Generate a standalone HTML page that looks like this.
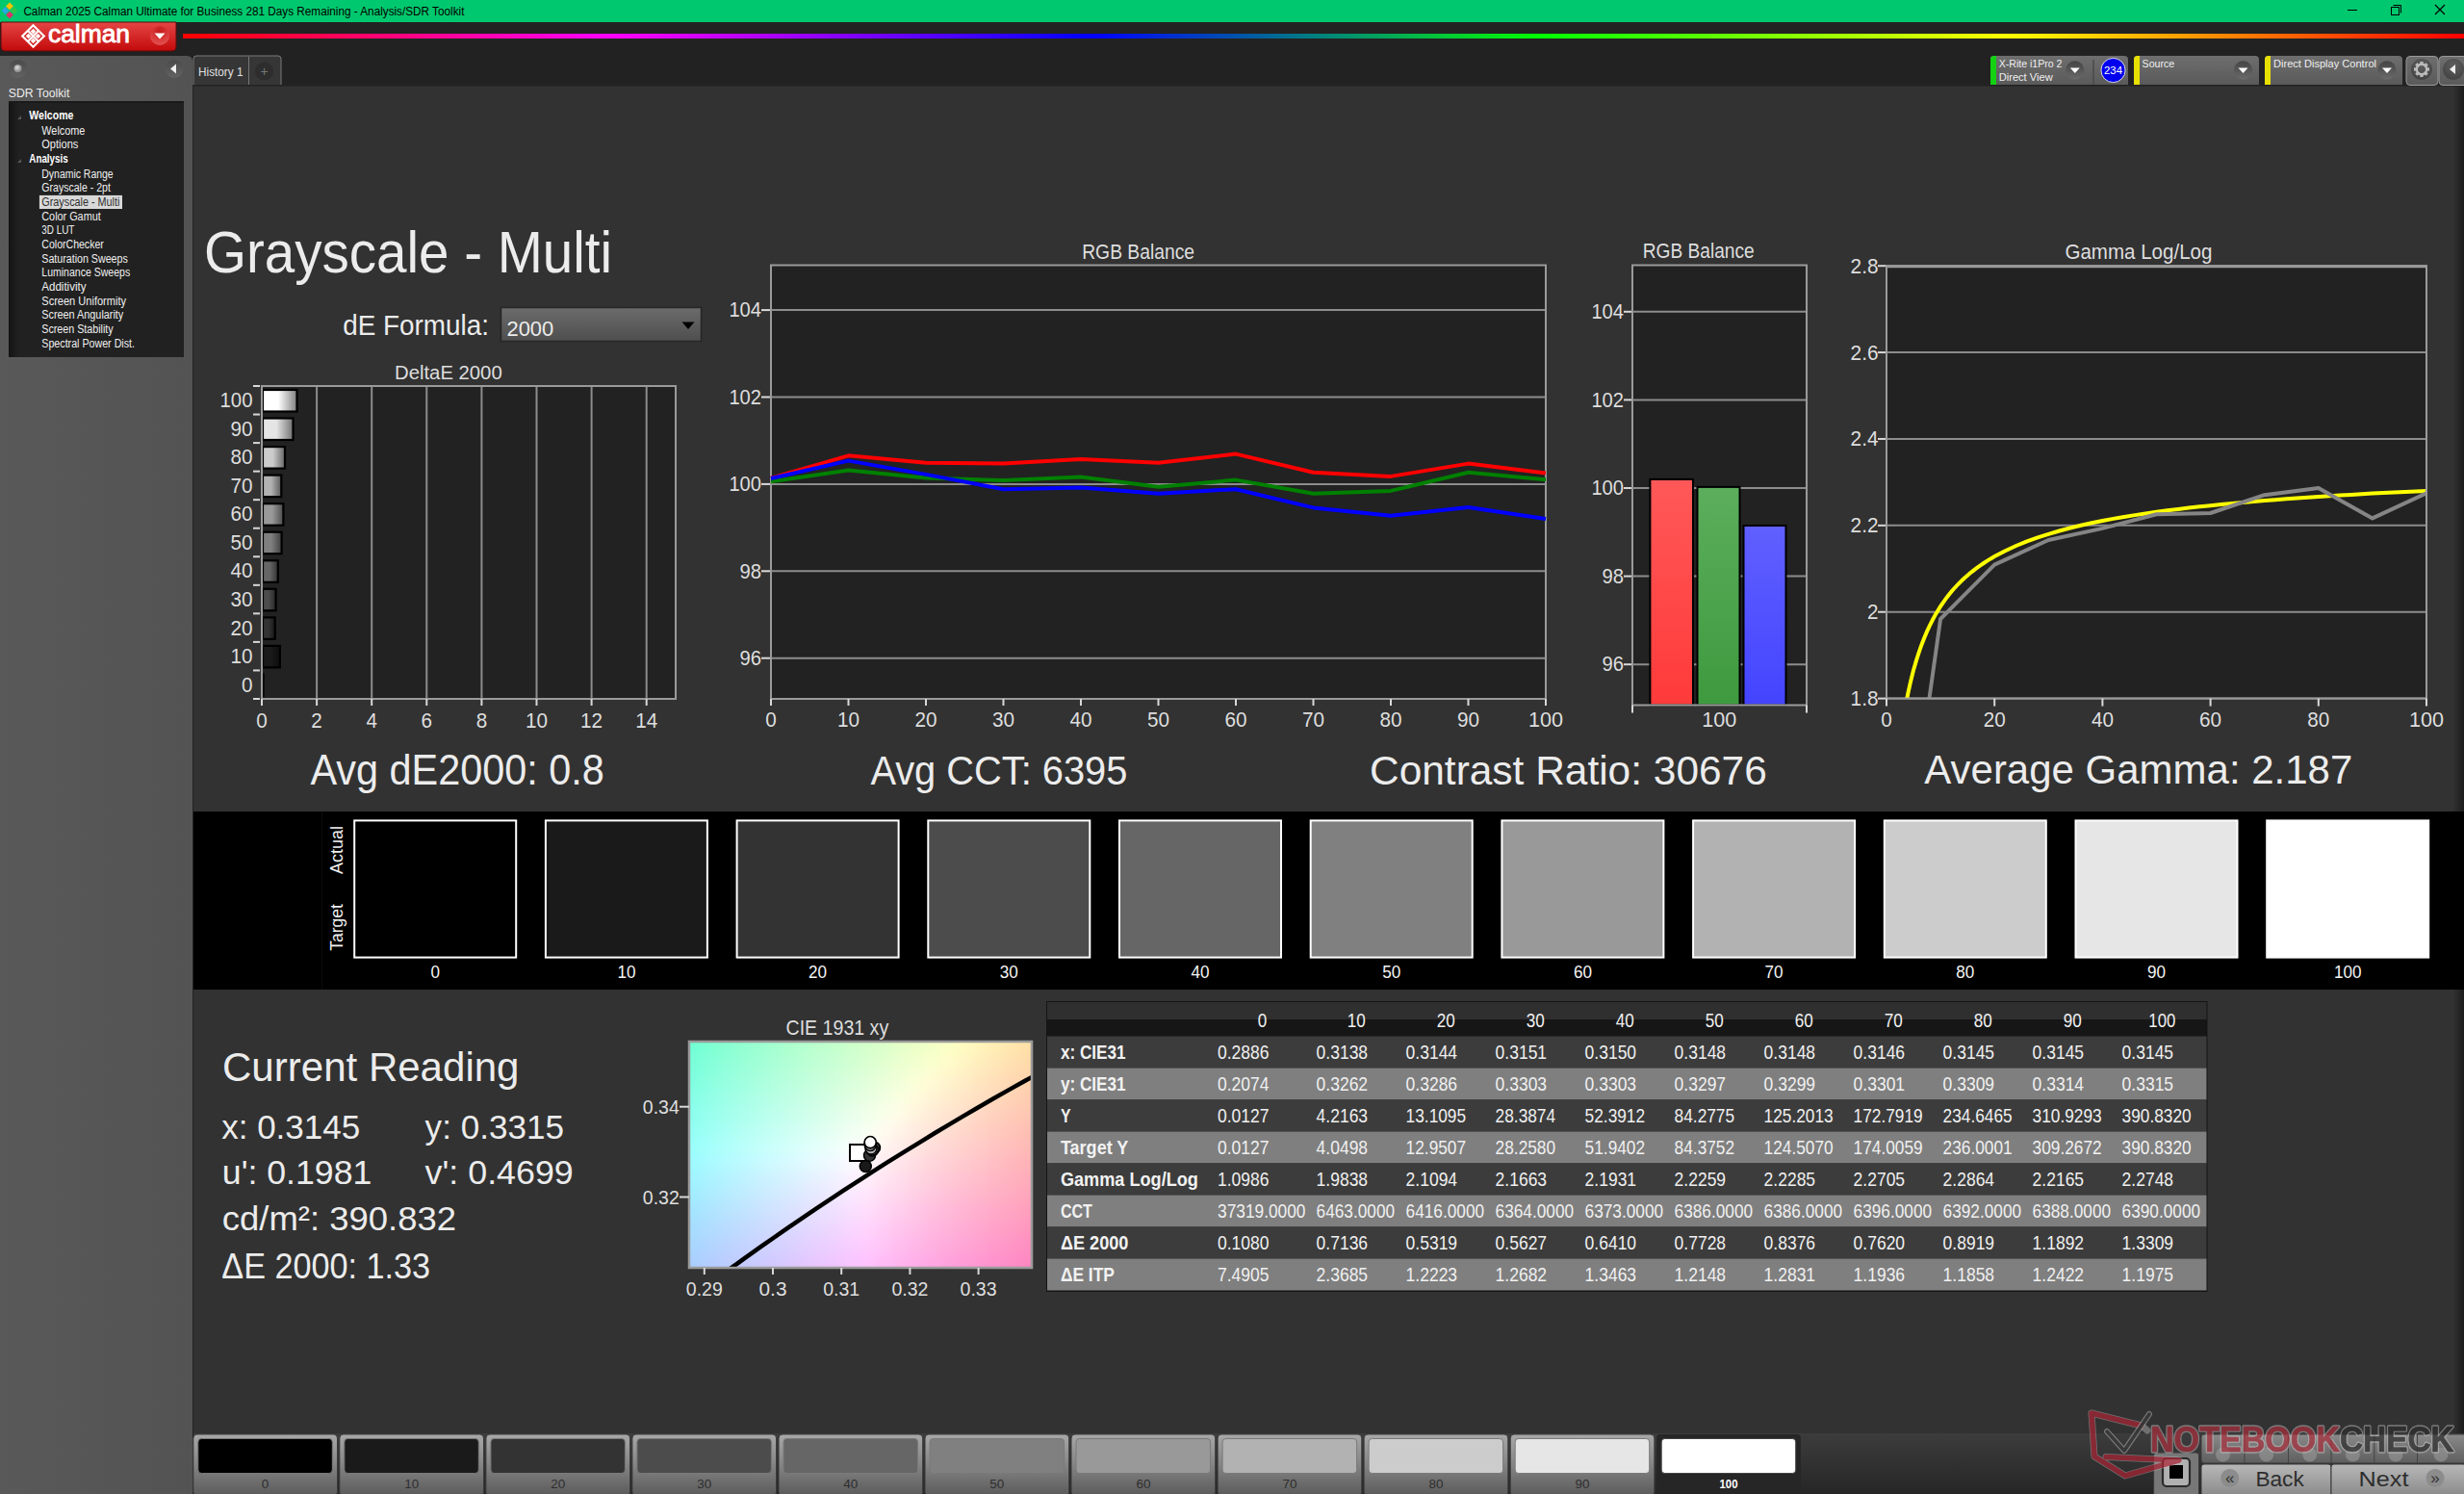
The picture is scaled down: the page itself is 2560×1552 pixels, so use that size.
<!DOCTYPE html><html><head><meta charset="utf-8"><title>Calman</title><style>html,body{margin:0;padding:0;background:#323232;overflow:hidden}svg{display:block}text{font-family:"Liberation Sans",sans-serif}</style></head><body>
<svg width="2560" height="1552" viewBox="0 0 2560 1552">
<defs>
<linearGradient id="rainbow" x1="0" x2="1" y1="0" y2="0">
<stop offset="0" stop-color="#ff0000"/><stop offset="0.19" stop-color="#ff00ff"/><stop offset="0.398" stop-color="#0000ff"/>
<stop offset="0.595" stop-color="#00ff00"/><stop offset="0.801" stop-color="#ffff00"/><stop offset="1" stop-color="#ff0000"/></linearGradient>
<linearGradient id="sidebar" x1="0" x2="1" y1="0" y2="0"><stop offset="0" stop-color="#595959"/><stop offset="1" stop-color="#535353"/></linearGradient>
<linearGradient id="redbtn" x1="0" x2="0" y1="0" y2="1"><stop offset="0" stop-color="#e54545"/><stop offset="1" stop-color="#c30a0a"/></linearGradient>
<linearGradient id="panel" x1="0" x2="0" y1="0" y2="1"><stop offset="0" stop-color="#6e6e6e"/><stop offset="1" stop-color="#5a5a5a"/></linearGradient>
<linearGradient id="strip" x1="0" x2="0" y1="0" y2="1"><stop offset="0" stop-color="#3c3c3c"/><stop offset="1" stop-color="#262626"/></linearGradient>
<linearGradient id="btn" x1="0" x2="0" y1="0" y2="1"><stop offset="0" stop-color="#a8a8a8"/><stop offset="0.45" stop-color="#888"/><stop offset="1" stop-color="#5a5a5a"/></linearGradient>
<linearGradient id="dd" x1="0" x2="0" y1="0" y2="1"><stop offset="0" stop-color="#6c6c6c"/><stop offset="1" stop-color="#4e4e4e"/></linearGradient>
<radialGradient id="knob" cx="0.5" cy="0.35" r="0.6"><stop offset="0" stop-color="#5a5a5a"/><stop offset="1" stop-color="#3a3a3a"/></radialGradient>
<linearGradient id="rightedge" x1="0" x2="1" y1="0" y2="0"><stop offset="0" stop-color="#323232"/><stop offset="1" stop-color="#1c1c1c"/></linearGradient>
</defs>
<rect x="0" y="0" width="2560" height="23" fill="#00c86e"/>
<rect x="0" y="23" width="2560" height="65" fill="#222222"/>
<rect x="190" y="35" width="2370" height="5" fill="url(#rainbow)"/>
<path d="M0 58 H194 Q200 58 200 64 V1552 H0 Z" fill="url(#sidebar)"/>
<rect x="200" y="88" width="2360" height="1464" fill="#323232"/>
<rect x="2548" y="88" width="12" height="1464" fill="url(#rightedge)"/>
<rect x="200" y="88" width="1" height="1464" fill="#222"/>
<linearGradient id="knob2" x1="0" x2="0" y1="0" y2="1"><stop offset="0" stop-color="#444"/><stop offset="1" stop-color="#6a6a6a"/></linearGradient>
<g transform="translate(10,11) rotate(45)"><rect x="-6" y="-6" width="5.5" height="5.5" fill="#f5c400"/><rect x="0.5" y="-6" width="5.5" height="5.5" fill="#2cc84a"/><rect x="-6" y="0.5" width="5.5" height="5.5" fill="#2aa8e0"/><rect x="0.5" y="0.5" width="5.5" height="5.5" fill="#e0306a"/></g>
<text x="24.4" y="15.8" font-size="12.50" textLength="458.0" lengthAdjust="spacingAndGlyphs" fill="#000">Calman 2025 Calman Ultimate for Business 281 Days Remaining  - Analysis/SDR Toolkit</text>
<line x1="2439" y1="10.5" x2="2449" y2="10.5" stroke="#000" stroke-width="1"/>
<rect x="2484.5" y="7.5" width="8" height="8" fill="none" stroke="#000" stroke-width="1"/><path d="M2486.5 5.5 H2494.5 V13.5" fill="none" stroke="#000" stroke-width="1"/>
<path d="M2530 5 L2540 15 M2540 5 L2530 15" stroke="#000" stroke-width="1.2"/>
<path d="M1 23 H183 V49 Q183 53 179 53 H5 Q1 53 1 49 Z" fill="url(#redbtn)" stroke="#5a0a0a" stroke-width="1"/>
<g transform="translate(34.5,37.5) rotate(45)" fill="none" stroke="#fff" stroke-width="2.2"><rect x="-8" y="-8" width="16" height="16"/><path d="M0 -8 V8 M-8 0 H8"/></g>
<g transform="translate(34.5,37.5) rotate(45)" fill="#fff"><rect x="-5.5" y="-5.5" width="4" height="4"/><rect x="1.5" y="-5.5" width="4" height="4"/><rect x="-5.5" y="1.5" width="4" height="4"/><rect x="1.5" y="1.5" width="4" height="4"/></g>
<text x="50.0" y="43.5" font-size="26.50" textLength="85.0" lengthAdjust="spacingAndGlyphs" fill="#fff" stroke="#fff" stroke-width="0.9">calman</text>
<radialGradient id="rknob" cx="0.5" cy="0.25" r="0.75"><stop offset="0" stop-color="#c81818"/><stop offset="1" stop-color="#e45252"/></radialGradient><circle cx="166" cy="37" r="10" fill="url(#rknob)"/>
<path d="M160.5 34.5 H171.5 L166 40.5 Z" fill="#fff"/>
<path d="M201 88 V61 Q201 58 204 58 H289 Q292 58 292 61 V88 Z" fill="#363636"/>
<path d="M201 88 V61 Q201 58 204 58 H289 Q292 58 292 61 V88" fill="none" stroke="#7a7a7a" stroke-width="1"/>
<rect x="200" y="88" width="2360" height="1.5" fill="#222"/>
<line x1="258.5" y1="59" x2="258.5" y2="88" stroke="#777" stroke-width="1"/>
<text x="206.0" y="78.5" font-size="13.37" textLength="46.5" lengthAdjust="spacingAndGlyphs" fill="#e0e0e0">History 1</text>
<circle cx="274.5" cy="74" r="9.5" fill="#2c2c2c" opacity="0.9"/>
<text x="274.5" y="78.5" font-size="14.00" text-anchor="middle" fill="#777">+</text>
<path d="M2068 88 V61 Q2068 58 2071 58 H2207 Q2211 58 2211 62 V88 Z" fill="url(#panel)"/>
<path d="M2068 88 V62 Q2068 58 2072 58 H2074 V88 Z" fill="#12d212"/>
<circle cx="2155.8" cy="73" r="9.7" fill="url(#knob2)"/>
<path d="M2150.8 70.5 H2160.8 L2155.8 76 Z" fill="#fff"/>
<text x="2076.7" y="69.8" font-size="11.05" textLength="65.8" lengthAdjust="spacingAndGlyphs" fill="#f0f0f0">X-Rite i1Pro 2</text>
<text x="2076.7" y="83.6" font-size="11.05" textLength="56.0" lengthAdjust="spacingAndGlyphs" fill="#f0f0f0">Direct View</text>
<line x1="2175" y1="62" x2="2175" y2="88" stroke="#4a4a4a" stroke-width="1.5"/>
<circle cx="2195.5" cy="73" r="12.6" fill="#0000ee" stroke="#ddd" stroke-width="1"/>
<text x="2195.5" y="77.0" font-size="10.76" textLength="19.0" lengthAdjust="spacingAndGlyphs" text-anchor="middle" fill="#fff">234</text>
<path d="M2217 88 V61 Q2217 58 2220 58 H2343 Q2347 58 2347 62 V88 Z" fill="url(#panel)"/>
<path d="M2217 88 V62 Q2217 58 2221 58 H2223 V88 Z" fill="#e8e000"/>
<circle cx="2330.5" cy="73" r="9.7" fill="url(#knob2)"/>
<path d="M2325.5 70.5 H2335.5 L2330.5 76 Z" fill="#fff"/>
<text x="2225.6" y="69.8" font-size="11.05" textLength="33.5" lengthAdjust="spacingAndGlyphs" fill="#f0f0f0">Source</text>
<path d="M2353 88 V61 Q2353 58 2356 58 H2492 Q2496 58 2496 62 V88 Z" fill="url(#panel)"/>
<path d="M2353 88 V62 Q2353 58 2357 58 H2359 V88 Z" fill="#e8e000"/>
<circle cx="2480" cy="73" r="9.7" fill="url(#knob2)"/>
<path d="M2475 70.5 H2485 L2480 76 Z" fill="#fff"/>
<text x="2362.0" y="69.8" font-size="11.05" textLength="107.0" lengthAdjust="spacingAndGlyphs" fill="#f0f0f0">Direct Display Control</text>
<rect x="2500" y="58.5" width="33" height="30" rx="4" fill="url(#panel)" stroke="#999" stroke-width="1"/>
<circle cx="2516" cy="72" r="11" fill="url(#knob)" opacity="0.7"/>
<g transform="translate(2516,72)" fill="#bbb"><rect x="-1.6" y="-8" width="3.2" height="4" transform="rotate(0)"/><rect x="-1.6" y="-8" width="3.2" height="4" transform="rotate(45)"/><rect x="-1.6" y="-8" width="3.2" height="4" transform="rotate(90)"/><rect x="-1.6" y="-8" width="3.2" height="4" transform="rotate(135)"/><rect x="-1.6" y="-8" width="3.2" height="4" transform="rotate(180)"/><rect x="-1.6" y="-8" width="3.2" height="4" transform="rotate(225)"/><rect x="-1.6" y="-8" width="3.2" height="4" transform="rotate(270)"/><rect x="-1.6" y="-8" width="3.2" height="4" transform="rotate(315)"/><circle r="5.2" fill="none" stroke="#bbb" stroke-width="2.4"/></g>
<rect x="2534" y="58.5" width="30" height="30" rx="4" fill="url(#panel)" stroke="#999" stroke-width="1"/>
<circle cx="2549" cy="72" r="11" fill="url(#knob)" opacity="0.7"/>
<path d="M2545 72 L2551 67 V77 Z" fill="#eee"/>
<linearGradient id="sknob" x1="0" x2="0" y1="0" y2="1"><stop offset="0" stop-color="#4a4a4a"/><stop offset="1" stop-color="#626262"/></linearGradient>
<radialGradient id="ball" cx="0.4" cy="0.35" r="0.7"><stop offset="0" stop-color="#e0e0e0"/><stop offset="1" stop-color="#777"/></radialGradient>
<circle cx="18.6" cy="71.5" r="9.5" fill="url(#sknob)"/>
<circle cx="18.6" cy="71.3" r="4" fill="url(#ball)"/>
<circle cx="181" cy="71.5" r="9.5" fill="url(#sknob)"/>
<path d="M177 71.5 L183 66.5 V76.5 Z" fill="#f0f0f0"/>
<text x="8.8" y="100.8" font-size="13.37" textLength="63.7" lengthAdjust="spacingAndGlyphs" fill="#ececec">SDR Toolkit</text>
<linearGradient id="treel" x1="0" x2="1" y1="0" y2="0"><stop offset="0" stop-color="#141414"/><stop offset="0.06" stop-color="#212121"/><stop offset="1" stop-color="#212121"/></linearGradient>
<rect x="9" y="105" width="182" height="266" fill="url(#treel)"/>
<rect x="9" y="105" width="182" height="2" fill="#1a1a1a"/>
<path d="M18 124 L22 124 L22 120 Z" fill="#555"/>
<path d="M18 169 L22 169 L22 165 Z" fill="#555"/>
<text x="30.3" y="124.2" font-size="12.21" textLength="46.1" lengthAdjust="spacingAndGlyphs" font-weight="bold" fill="#ffffff">Welcome</text>
<text x="43.3" y="140.1" font-size="12.21" textLength="45.1" lengthAdjust="spacingAndGlyphs" fill="#f0f0f0">Welcome</text>
<text x="43.3" y="153.8" font-size="12.21" textLength="38.0" lengthAdjust="spacingAndGlyphs" fill="#f0f0f0">Options</text>
<text x="30.3" y="169.3" font-size="12.21" textLength="40.4" lengthAdjust="spacingAndGlyphs" font-weight="bold" fill="#ffffff">Analysis</text>
<text x="43.3" y="185.2" font-size="12.21" textLength="74.4" lengthAdjust="spacingAndGlyphs" fill="#f0f0f0">Dynamic Range</text>
<text x="43.3" y="199.1" font-size="12.21" textLength="71.6" lengthAdjust="spacingAndGlyphs" fill="#f0f0f0">Grayscale - 2pt</text>
<rect x="40.9" y="202.9" width="86.1" height="14.1" fill="#d8d8d8"/>
<text x="43.3" y="213.9" font-size="12.21" textLength="81.1" lengthAdjust="spacingAndGlyphs" fill="#303030">Grayscale - Multi</text>
<text x="43.3" y="228.9" font-size="12.21" textLength="61.4" lengthAdjust="spacingAndGlyphs" fill="#f0f0f0">Color Gamut</text>
<text x="43.3" y="242.8" font-size="12.21" textLength="34.0" lengthAdjust="spacingAndGlyphs" fill="#f0f0f0">3D LUT</text>
<text x="43.3" y="258.1" font-size="12.21" textLength="64.5" lengthAdjust="spacingAndGlyphs" fill="#f0f0f0">ColorChecker</text>
<text x="43.3" y="273.1" font-size="12.21" textLength="89.5" lengthAdjust="spacingAndGlyphs" fill="#f0f0f0">Saturation Sweeps</text>
<text x="43.3" y="287.0" font-size="12.21" textLength="91.9" lengthAdjust="spacingAndGlyphs" fill="#f0f0f0">Luminance Sweeps</text>
<text x="43.3" y="302.0" font-size="12.21" textLength="46.2" lengthAdjust="spacingAndGlyphs" fill="#f0f0f0">Additivity</text>
<text x="43.3" y="316.8" font-size="12.21" textLength="87.7" lengthAdjust="spacingAndGlyphs" fill="#f0f0f0">Screen Uniformity</text>
<text x="43.3" y="331.0" font-size="12.21" textLength="85.0" lengthAdjust="spacingAndGlyphs" fill="#f0f0f0">Screen Angularity</text>
<text x="43.3" y="346.0" font-size="12.21" textLength="74.4" lengthAdjust="spacingAndGlyphs" fill="#f0f0f0">Screen Stability</text>
<text x="43.3" y="361.0" font-size="12.21" textLength="96.7" lengthAdjust="spacingAndGlyphs" fill="#f0f0f0">Spectral Power Dist.</text>
<text x="212.0" y="283.1" font-size="61.48" textLength="424.0" lengthAdjust="spacingAndGlyphs" fill="#ececec">Grayscale - Multi</text>
<text x="356.3" y="347.8" font-size="29.65" textLength="151.6" lengthAdjust="spacingAndGlyphs" fill="#ececec">dE Formula:</text>
<rect x="520.5" y="319.5" width="208" height="35" fill="url(#dd)" stroke="#262626" stroke-width="1.5"/>
<text x="526.5" y="348.6" font-size="22.24" textLength="48.7" lengthAdjust="spacingAndGlyphs" fill="#ececec">2000</text>
<path d="M708.5 334.5 H721.5 L715 342 Z" fill="#000"/>
<rect x="272" y="401" width="430" height="325" fill="#222222"/>
<text x="410.0" y="393.8" font-size="21.08" textLength="111.7" lengthAdjust="spacingAndGlyphs" fill="#dedede">DeltaE 2000</text>
<line x1="329.1" y1="401" x2="329.1" y2="726" stroke="#8c8c8c" stroke-width="2"/>
<line x1="386.2" y1="401" x2="386.2" y2="726" stroke="#8c8c8c" stroke-width="2"/>
<line x1="443.3" y1="401" x2="443.3" y2="726" stroke="#8c8c8c" stroke-width="2"/>
<line x1="500.4" y1="401" x2="500.4" y2="726" stroke="#8c8c8c" stroke-width="2"/>
<line x1="557.5" y1="401" x2="557.5" y2="726" stroke="#8c8c8c" stroke-width="2"/>
<line x1="614.6" y1="401" x2="614.6" y2="726" stroke="#8c8c8c" stroke-width="2"/>
<line x1="671.7" y1="401" x2="671.7" y2="726" stroke="#8c8c8c" stroke-width="2"/>
<linearGradient id="deg100" x1="0" x2="1" y1="0" y2="0"><stop offset="0" stop-color="rgb(255,255,255)"/><stop offset="0.45" stop-color="rgb(255,255,255)"/><stop offset="1" stop-color="rgb(127,127,127)"/></linearGradient>
<rect x="273" y="405.0" width="35.5" height="22.5" fill="url(#deg100)" stroke="#000" stroke-width="2.2"/>
<text x="262.5" y="423.2" font-size="21.51" textLength="34.0" lengthAdjust="spacingAndGlyphs" text-anchor="end" fill="#dedede">100</text>
<linearGradient id="deg90" x1="0" x2="1" y1="0" y2="0"><stop offset="0" stop-color="rgb(229,229,229)"/><stop offset="0.45" stop-color="rgb(229,229,229)"/><stop offset="1" stop-color="rgb(114,114,114)"/></linearGradient>
<rect x="273" y="434.5" width="31.5" height="22.5" fill="url(#deg90)" stroke="#000" stroke-width="2.2"/>
<text x="262.5" y="452.7" font-size="21.51" textLength="23.0" lengthAdjust="spacingAndGlyphs" text-anchor="end" fill="#dedede">90</text>
<linearGradient id="deg80" x1="0" x2="1" y1="0" y2="0"><stop offset="0" stop-color="rgb(204,204,204)"/><stop offset="0.45" stop-color="rgb(204,204,204)"/><stop offset="1" stop-color="rgb(102,102,102)"/></linearGradient>
<rect x="273" y="464.1" width="23.0" height="22.5" fill="url(#deg80)" stroke="#000" stroke-width="2.2"/>
<text x="262.5" y="482.3" font-size="21.51" textLength="23.0" lengthAdjust="spacingAndGlyphs" text-anchor="end" fill="#dedede">80</text>
<linearGradient id="deg70" x1="0" x2="1" y1="0" y2="0"><stop offset="0" stop-color="rgb(178,178,178)"/><stop offset="0.45" stop-color="rgb(178,178,178)"/><stop offset="1" stop-color="rgb(89,89,89)"/></linearGradient>
<rect x="273" y="493.6" width="19.3" height="22.5" fill="url(#deg70)" stroke="#000" stroke-width="2.2"/>
<text x="262.5" y="511.8" font-size="21.51" textLength="23.0" lengthAdjust="spacingAndGlyphs" text-anchor="end" fill="#dedede">70</text>
<linearGradient id="deg60" x1="0" x2="1" y1="0" y2="0"><stop offset="0" stop-color="rgb(153,153,153)"/><stop offset="0.45" stop-color="rgb(153,153,153)"/><stop offset="1" stop-color="rgb(76,76,76)"/></linearGradient>
<rect x="273" y="523.2" width="21.4" height="22.5" fill="url(#deg60)" stroke="#000" stroke-width="2.2"/>
<text x="262.5" y="541.4" font-size="21.51" textLength="23.0" lengthAdjust="spacingAndGlyphs" text-anchor="end" fill="#dedede">60</text>
<linearGradient id="deg50" x1="0" x2="1" y1="0" y2="0"><stop offset="0" stop-color="rgb(127,127,127)"/><stop offset="0.45" stop-color="rgb(127,127,127)"/><stop offset="1" stop-color="rgb(63,63,63)"/></linearGradient>
<rect x="273" y="552.7" width="19.6" height="22.5" fill="url(#deg50)" stroke="#000" stroke-width="2.2"/>
<text x="262.5" y="570.9" font-size="21.51" textLength="23.0" lengthAdjust="spacingAndGlyphs" text-anchor="end" fill="#dedede">50</text>
<linearGradient id="deg40" x1="0" x2="1" y1="0" y2="0"><stop offset="0" stop-color="rgb(102,102,102)"/><stop offset="0.45" stop-color="rgb(102,102,102)"/><stop offset="1" stop-color="rgb(51,51,51)"/></linearGradient>
<rect x="273" y="582.3" width="15.8" height="22.5" fill="url(#deg40)" stroke="#000" stroke-width="2.2"/>
<text x="262.5" y="600.4" font-size="21.51" textLength="23.0" lengthAdjust="spacingAndGlyphs" text-anchor="end" fill="#dedede">40</text>
<linearGradient id="deg30" x1="0" x2="1" y1="0" y2="0"><stop offset="0" stop-color="rgb(76,76,76)"/><stop offset="0.45" stop-color="rgb(76,76,76)"/><stop offset="1" stop-color="rgb(38,38,38)"/></linearGradient>
<rect x="273" y="611.8" width="13.6" height="22.5" fill="url(#deg30)" stroke="#000" stroke-width="2.2"/>
<text x="262.5" y="630.0" font-size="21.51" textLength="23.0" lengthAdjust="spacingAndGlyphs" text-anchor="end" fill="#dedede">30</text>
<linearGradient id="deg20" x1="0" x2="1" y1="0" y2="0"><stop offset="0" stop-color="rgb(51,51,51)"/><stop offset="0.45" stop-color="rgb(51,51,51)"/><stop offset="1" stop-color="rgb(25,25,25)"/></linearGradient>
<rect x="273" y="641.4" width="12.7" height="22.5" fill="url(#deg20)" stroke="#000" stroke-width="2.2"/>
<text x="262.5" y="659.5" font-size="21.51" textLength="23.0" lengthAdjust="spacingAndGlyphs" text-anchor="end" fill="#dedede">20</text>
<linearGradient id="deg10" x1="0" x2="1" y1="0" y2="0"><stop offset="0" stop-color="rgb(26,26,26)"/><stop offset="0.45" stop-color="rgb(26,26,26)"/><stop offset="1" stop-color="rgb(13,13,13)"/></linearGradient>
<rect x="273" y="670.9" width="17.9" height="22.5" fill="url(#deg10)" stroke="#000" stroke-width="2.2"/>
<text x="262.5" y="689.1" font-size="21.51" textLength="23.0" lengthAdjust="spacingAndGlyphs" text-anchor="end" fill="#dedede">10</text>
<linearGradient id="deg0" x1="0" x2="1" y1="0" y2="0"><stop offset="0" stop-color="rgb(0,0,0)"/><stop offset="0.45" stop-color="rgb(0,0,0)"/><stop offset="1" stop-color="rgb(0,0,0)"/></linearGradient>
<rect x="273" y="700.5" width="0.6" height="22.5" fill="url(#deg0)" stroke="#000" stroke-width="2.2"/>
<text x="262.5" y="718.6" font-size="21.51" textLength="11.5" lengthAdjust="spacingAndGlyphs" text-anchor="end" fill="#dedede">0</text>
<line x1="263" y1="401.0" x2="270" y2="401.0" stroke="#d8d8d8" stroke-width="2"/>
<line x1="263" y1="430.54545454545456" x2="270" y2="430.54545454545456" stroke="#d8d8d8" stroke-width="2"/>
<line x1="263" y1="460.0909090909091" x2="270" y2="460.0909090909091" stroke="#d8d8d8" stroke-width="2"/>
<line x1="263" y1="489.6363636363636" x2="270" y2="489.6363636363636" stroke="#d8d8d8" stroke-width="2"/>
<line x1="263" y1="519.1818181818182" x2="270" y2="519.1818181818182" stroke="#d8d8d8" stroke-width="2"/>
<line x1="263" y1="548.7272727272727" x2="270" y2="548.7272727272727" stroke="#d8d8d8" stroke-width="2"/>
<line x1="263" y1="578.2727272727273" x2="270" y2="578.2727272727273" stroke="#d8d8d8" stroke-width="2"/>
<line x1="263" y1="607.8181818181818" x2="270" y2="607.8181818181818" stroke="#d8d8d8" stroke-width="2"/>
<line x1="263" y1="637.3636363636364" x2="270" y2="637.3636363636364" stroke="#d8d8d8" stroke-width="2"/>
<line x1="263" y1="666.909090909091" x2="270" y2="666.909090909091" stroke="#d8d8d8" stroke-width="2"/>
<line x1="263" y1="696.4545454545455" x2="270" y2="696.4545454545455" stroke="#d8d8d8" stroke-width="2"/>
<line x1="263" y1="726.0" x2="270" y2="726.0" stroke="#d8d8d8" stroke-width="2"/>
<rect x="272" y="401" width="430" height="325" fill="none" stroke="#9a9a9a" stroke-width="2"/>
<line x1="272.0" y1="726" x2="272.0" y2="733" stroke="#d8d8d8" stroke-width="2"/>
<text x="272.0" y="756.0" font-size="21.51" textLength="11.5" lengthAdjust="spacingAndGlyphs" text-anchor="middle" fill="#dedede">0</text>
<line x1="329.1" y1="726" x2="329.1" y2="733" stroke="#d8d8d8" stroke-width="2"/>
<text x="329.1" y="756.0" font-size="21.51" textLength="11.5" lengthAdjust="spacingAndGlyphs" text-anchor="middle" fill="#dedede">2</text>
<line x1="386.2" y1="726" x2="386.2" y2="733" stroke="#d8d8d8" stroke-width="2"/>
<text x="386.2" y="756.0" font-size="21.51" textLength="11.5" lengthAdjust="spacingAndGlyphs" text-anchor="middle" fill="#dedede">4</text>
<line x1="443.3" y1="726" x2="443.3" y2="733" stroke="#d8d8d8" stroke-width="2"/>
<text x="443.3" y="756.0" font-size="21.51" textLength="11.5" lengthAdjust="spacingAndGlyphs" text-anchor="middle" fill="#dedede">6</text>
<line x1="500.4" y1="726" x2="500.4" y2="733" stroke="#d8d8d8" stroke-width="2"/>
<text x="500.4" y="756.0" font-size="21.51" textLength="11.5" lengthAdjust="spacingAndGlyphs" text-anchor="middle" fill="#dedede">8</text>
<line x1="557.5" y1="726" x2="557.5" y2="733" stroke="#d8d8d8" stroke-width="2"/>
<text x="557.5" y="756.0" font-size="21.51" textLength="23.0" lengthAdjust="spacingAndGlyphs" text-anchor="middle" fill="#dedede">10</text>
<line x1="614.6" y1="726" x2="614.6" y2="733" stroke="#d8d8d8" stroke-width="2"/>
<text x="614.6" y="756.0" font-size="21.51" textLength="23.0" lengthAdjust="spacingAndGlyphs" text-anchor="middle" fill="#dedede">12</text>
<line x1="671.7" y1="726" x2="671.7" y2="733" stroke="#d8d8d8" stroke-width="2"/>
<text x="671.7" y="756.0" font-size="21.51" textLength="23.0" lengthAdjust="spacingAndGlyphs" text-anchor="middle" fill="#dedede">14</text>
<text x="322.4" y="815.2" font-size="44.62" textLength="305.5" lengthAdjust="spacingAndGlyphs" fill="#ececec">Avg dE2000: 0.8</text>
<rect x="801" y="275.5" width="805" height="450.5" fill="#222222"/>
<text x="1124.2" y="269.2" font-size="21.22" textLength="116.9" lengthAdjust="spacingAndGlyphs" fill="#dedede">RGB Balance</text>
<line x1="801" y1="322.09999999999997" x2="1606" y2="322.09999999999997" stroke="#8c8c8c" stroke-width="2"/>
<line x1="791" y1="322.09999999999997" x2="801" y2="322.09999999999997" stroke="#d8d8d8" stroke-width="2"/>
<text x="791.0" y="329.3" font-size="21.22" textLength="33.6" lengthAdjust="spacingAndGlyphs" text-anchor="end" fill="#dedede">104</text>
<line x1="801" y1="412.5" x2="1606" y2="412.5" stroke="#8c8c8c" stroke-width="2"/>
<line x1="791" y1="412.5" x2="801" y2="412.5" stroke="#d8d8d8" stroke-width="2"/>
<text x="791.0" y="419.7" font-size="21.22" textLength="33.6" lengthAdjust="spacingAndGlyphs" text-anchor="end" fill="#dedede">102</text>
<line x1="801" y1="502.9" x2="1606" y2="502.9" stroke="#8c8c8c" stroke-width="2"/>
<line x1="791" y1="502.9" x2="801" y2="502.9" stroke="#d8d8d8" stroke-width="2"/>
<text x="791.0" y="510.1" font-size="21.22" textLength="33.6" lengthAdjust="spacingAndGlyphs" text-anchor="end" fill="#dedede">100</text>
<line x1="801" y1="593.3" x2="1606" y2="593.3" stroke="#8c8c8c" stroke-width="2"/>
<line x1="791" y1="593.3" x2="801" y2="593.3" stroke="#d8d8d8" stroke-width="2"/>
<text x="791.0" y="600.5" font-size="21.22" textLength="22.5" lengthAdjust="spacingAndGlyphs" text-anchor="end" fill="#dedede">98</text>
<line x1="801" y1="683.7" x2="1606" y2="683.7" stroke="#8c8c8c" stroke-width="2"/>
<line x1="791" y1="683.7" x2="801" y2="683.7" stroke="#d8d8d8" stroke-width="2"/>
<text x="791.0" y="690.9" font-size="21.22" textLength="22.5" lengthAdjust="spacingAndGlyphs" text-anchor="end" fill="#dedede">96</text>
<rect x="801" y="275.5" width="805" height="450.5" fill="none" stroke="#9a9a9a" stroke-width="2"/>
<line x1="801.0" y1="726" x2="801.0" y2="733" stroke="#d8d8d8" stroke-width="2"/>
<text x="801.0" y="755.0" font-size="21.22" textLength="11.5" lengthAdjust="spacingAndGlyphs" text-anchor="middle" fill="#dedede">0</text>
<line x1="881.5" y1="726" x2="881.5" y2="733" stroke="#d8d8d8" stroke-width="2"/>
<text x="881.5" y="755.0" font-size="21.22" textLength="23.0" lengthAdjust="spacingAndGlyphs" text-anchor="middle" fill="#dedede">10</text>
<line x1="962.0" y1="726" x2="962.0" y2="733" stroke="#d8d8d8" stroke-width="2"/>
<text x="962.0" y="755.0" font-size="21.22" textLength="23.0" lengthAdjust="spacingAndGlyphs" text-anchor="middle" fill="#dedede">20</text>
<line x1="1042.5" y1="726" x2="1042.5" y2="733" stroke="#d8d8d8" stroke-width="2"/>
<text x="1042.5" y="755.0" font-size="21.22" textLength="23.0" lengthAdjust="spacingAndGlyphs" text-anchor="middle" fill="#dedede">30</text>
<line x1="1123.0" y1="726" x2="1123.0" y2="733" stroke="#d8d8d8" stroke-width="2"/>
<text x="1123.0" y="755.0" font-size="21.22" textLength="23.0" lengthAdjust="spacingAndGlyphs" text-anchor="middle" fill="#dedede">40</text>
<line x1="1203.5" y1="726" x2="1203.5" y2="733" stroke="#d8d8d8" stroke-width="2"/>
<text x="1203.5" y="755.0" font-size="21.22" textLength="23.0" lengthAdjust="spacingAndGlyphs" text-anchor="middle" fill="#dedede">50</text>
<line x1="1284.0" y1="726" x2="1284.0" y2="733" stroke="#d8d8d8" stroke-width="2"/>
<text x="1284.0" y="755.0" font-size="21.22" textLength="23.0" lengthAdjust="spacingAndGlyphs" text-anchor="middle" fill="#dedede">60</text>
<line x1="1364.5" y1="726" x2="1364.5" y2="733" stroke="#d8d8d8" stroke-width="2"/>
<text x="1364.5" y="755.0" font-size="21.22" textLength="23.0" lengthAdjust="spacingAndGlyphs" text-anchor="middle" fill="#dedede">70</text>
<line x1="1445.0" y1="726" x2="1445.0" y2="733" stroke="#d8d8d8" stroke-width="2"/>
<text x="1445.0" y="755.0" font-size="21.22" textLength="23.0" lengthAdjust="spacingAndGlyphs" text-anchor="middle" fill="#dedede">80</text>
<line x1="1525.5" y1="726" x2="1525.5" y2="733" stroke="#d8d8d8" stroke-width="2"/>
<text x="1525.5" y="755.0" font-size="21.22" textLength="23.0" lengthAdjust="spacingAndGlyphs" text-anchor="middle" fill="#dedede">90</text>
<line x1="1606.0" y1="726" x2="1606.0" y2="733" stroke="#d8d8d8" stroke-width="2"/>
<text x="1606.0" y="755.0" font-size="21.22" textLength="36.0" lengthAdjust="spacingAndGlyphs" text-anchor="middle" fill="#dedede">100</text>
<polyline points="801.0,496.6 881.5,473.3 962.0,480.8 1042.5,481.6 1123.0,477.0 1203.5,480.8 1284.0,471.6 1364.5,490.7 1445.0,494.9 1525.5,481.6 1606.0,491.6" fill="none" stroke="#ff0000" stroke-width="4" stroke-linejoin="round"/>
<polyline points="801.0,500.2 881.5,488.6 962.0,496.6 1042.5,499.0 1123.0,495.4 1203.5,505.7 1284.0,498.6 1364.5,512.7 1445.0,509.9 1525.5,490.7 1606.0,498.2" fill="none" stroke="#008000" stroke-width="4" stroke-linejoin="round"/>
<polyline points="801.0,497.0 881.5,478.6 962.0,492.9 1042.5,508.2 1123.0,506.6 1203.5,512.7 1284.0,508.2 1364.5,527.4 1445.0,535.7 1525.5,526.9 1606.0,539.0" fill="none" stroke="#0000ff" stroke-width="4" stroke-linejoin="round"/>
<text x="904.4" y="814.6" font-size="43.02" textLength="267.0" lengthAdjust="spacingAndGlyphs" fill="#ececec">Avg CCT: 6395</text>
<rect x="1696" y="275.5" width="181" height="457.0" fill="#222222"/>
<text x="1706.8" y="267.8" font-size="21.22" textLength="115.9" lengthAdjust="spacingAndGlyphs" fill="#dedede">RGB Balance</text>
<line x1="1696" y1="323.8" x2="1877" y2="323.8" stroke="#8c8c8c" stroke-width="2"/>
<line x1="1687" y1="323.8" x2="1696" y2="323.8" stroke="#d8d8d8" stroke-width="2"/>
<text x="1687.0" y="331.0" font-size="21.22" textLength="33.6" lengthAdjust="spacingAndGlyphs" text-anchor="end" fill="#dedede">104</text>
<line x1="1696" y1="415.4" x2="1877" y2="415.4" stroke="#8c8c8c" stroke-width="2"/>
<line x1="1687" y1="415.4" x2="1696" y2="415.4" stroke="#d8d8d8" stroke-width="2"/>
<text x="1687.0" y="422.6" font-size="21.22" textLength="33.6" lengthAdjust="spacingAndGlyphs" text-anchor="end" fill="#dedede">102</text>
<line x1="1696" y1="507.0" x2="1877" y2="507.0" stroke="#8c8c8c" stroke-width="2"/>
<line x1="1687" y1="507.0" x2="1696" y2="507.0" stroke="#d8d8d8" stroke-width="2"/>
<text x="1687.0" y="514.2" font-size="21.22" textLength="33.6" lengthAdjust="spacingAndGlyphs" text-anchor="end" fill="#dedede">100</text>
<line x1="1696" y1="598.6" x2="1877" y2="598.6" stroke="#8c8c8c" stroke-width="2"/>
<line x1="1687" y1="598.6" x2="1696" y2="598.6" stroke="#d8d8d8" stroke-width="2"/>
<text x="1687.0" y="605.8" font-size="21.22" textLength="22.5" lengthAdjust="spacingAndGlyphs" text-anchor="end" fill="#dedede">98</text>
<line x1="1696" y1="690.2" x2="1877" y2="690.2" stroke="#8c8c8c" stroke-width="2"/>
<line x1="1687" y1="690.2" x2="1696" y2="690.2" stroke="#d8d8d8" stroke-width="2"/>
<text x="1687.0" y="697.4" font-size="21.22" textLength="22.5" lengthAdjust="spacingAndGlyphs" text-anchor="end" fill="#dedede">96</text>
<linearGradient id="barR" x1="0" x2="0" y1="0" y2="1"><stop offset="0" stop-color="#ff5858"/><stop offset="1" stop-color="#ff3a3a"/></linearGradient>
<linearGradient id="barG" x1="0" x2="0" y1="0" y2="1"><stop offset="0" stop-color="#5cae5c"/><stop offset="1" stop-color="#3e9a3e"/></linearGradient>
<linearGradient id="barB" x1="0" x2="0" y1="0" y2="1"><stop offset="0" stop-color="#6060ff"/><stop offset="1" stop-color="#4444ff"/></linearGradient>
<rect x="1714.4" y="497.9" width="44.59999999999991" height="234.60000000000002" fill="url(#barR)" stroke="#000" stroke-width="2"/>
<rect x="1763.5" y="505.9" width="44.0" height="226.60000000000002" fill="url(#barG)" stroke="#000" stroke-width="2"/>
<rect x="1811.5" y="546" width="44.0" height="186.5" fill="url(#barB)" stroke="#000" stroke-width="2"/>
<rect x="1696" y="275.5" width="181" height="457.0" fill="none" stroke="#9a9a9a" stroke-width="2"/>
<line x1="1696" y1="732.5" x2="1696" y2="740.5" stroke="#d8d8d8" stroke-width="2"/>
<line x1="1877" y1="732.5" x2="1877" y2="740.5" stroke="#d8d8d8" stroke-width="2"/>
<text x="1786.2" y="755.1" font-size="21.22" textLength="36.0" lengthAdjust="spacingAndGlyphs" text-anchor="middle" fill="#dedede">100</text>
<text x="1423.0" y="814.6" font-size="43.02" textLength="412.8" lengthAdjust="spacingAndGlyphs" fill="#ececec">Contrast Ratio: 30676</text>
<rect x="1960" y="276.2" width="561" height="449.40000000000003" fill="#222222"/>
<text x="2145.4" y="268.5" font-size="21.22" textLength="153.1" lengthAdjust="spacingAndGlyphs" fill="#dedede">Gamma Log/Log</text>
<line x1="1960" y1="276.20000000000016" x2="2521" y2="276.20000000000016" stroke="#8c8c8c" stroke-width="2"/>
<line x1="1951" y1="276.20000000000016" x2="1960" y2="276.20000000000016" stroke="#d8d8d8" stroke-width="2"/>
<text x="1951.5" y="283.6" font-size="21.22" textLength="28.9" lengthAdjust="spacingAndGlyphs" text-anchor="end" fill="#dedede">2.8</text>
<line x1="1960" y1="366.08000000000004" x2="2521" y2="366.08000000000004" stroke="#8c8c8c" stroke-width="2"/>
<line x1="1951" y1="366.08000000000004" x2="1960" y2="366.08000000000004" stroke="#d8d8d8" stroke-width="2"/>
<text x="1951.5" y="373.5" font-size="21.22" textLength="28.9" lengthAdjust="spacingAndGlyphs" text-anchor="end" fill="#dedede">2.6</text>
<line x1="1960" y1="455.9600000000001" x2="2521" y2="455.9600000000001" stroke="#8c8c8c" stroke-width="2"/>
<line x1="1951" y1="455.9600000000001" x2="1960" y2="455.9600000000001" stroke="#d8d8d8" stroke-width="2"/>
<text x="1951.5" y="463.4" font-size="21.22" textLength="28.9" lengthAdjust="spacingAndGlyphs" text-anchor="end" fill="#dedede">2.4</text>
<line x1="1960" y1="545.8399999999999" x2="2521" y2="545.8399999999999" stroke="#8c8c8c" stroke-width="2"/>
<line x1="1951" y1="545.8399999999999" x2="1960" y2="545.8399999999999" stroke="#d8d8d8" stroke-width="2"/>
<text x="1951.5" y="553.2" font-size="21.22" textLength="28.9" lengthAdjust="spacingAndGlyphs" text-anchor="end" fill="#dedede">2.2</text>
<line x1="1960" y1="635.72" x2="2521" y2="635.72" stroke="#8c8c8c" stroke-width="2"/>
<line x1="1951" y1="635.72" x2="1960" y2="635.72" stroke="#d8d8d8" stroke-width="2"/>
<text x="1951.5" y="643.1" font-size="21.22" textLength="11.5" lengthAdjust="spacingAndGlyphs" text-anchor="end" fill="#dedede">2</text>
<line x1="1960" y1="725.6" x2="2521" y2="725.6" stroke="#8c8c8c" stroke-width="2"/>
<line x1="1951" y1="725.6" x2="1960" y2="725.6" stroke="#d8d8d8" stroke-width="2"/>
<text x="1951.5" y="733.0" font-size="21.22" textLength="28.9" lengthAdjust="spacingAndGlyphs" text-anchor="end" fill="#dedede">1.8</text>
<clipPath id="gclip"><rect x="1960" y="276.2" width="561" height="449.4"/></clipPath>
<polyline points="1976.8,751.7 1979.6,734.6 1982.4,720.0 1985.2,707.4 1988.0,696.3 1990.9,686.4 1993.7,677.6 1996.5,669.7 1999.3,662.5 2002.1,655.9 2004.9,649.9 2007.7,644.3 2010.5,639.1 2013.3,634.4 2016.1,629.9 2018.9,625.8 2021.7,621.9 2024.5,618.2 2027.3,614.8 2030.1,611.5 2032.9,608.5 2035.7,605.6 2038.5,602.8 2041.3,600.2 2044.2,597.7 2047.0,595.3 2049.8,593.1 2052.6,590.9 2055.4,588.8 2058.2,586.9 2061.0,585.0 2063.8,583.1 2066.6,581.4 2069.4,579.7 2072.2,578.1 2083.4,572.2 2094.6,567.0 2105.9,562.4 2117.1,558.4 2128.3,554.8 2139.5,551.5 2150.7,548.5 2162.0,545.8 2173.2,543.3 2184.4,541.0 2195.6,538.9 2206.8,537.0 2218.1,535.1 2229.3,533.4 2240.5,531.8 2251.7,530.3 2262.9,528.9 2274.2,527.6 2285.4,526.3 2296.6,525.2 2307.8,524.0 2319.0,523.0 2330.3,521.9 2341.5,521.0 2352.7,520.0 2363.9,519.2 2375.1,518.3 2386.4,517.5 2397.6,516.7 2408.8,516.0 2420.0,515.3 2431.2,514.6 2442.5,513.9 2453.7,513.3 2464.9,512.6 2476.1,512.0 2487.3,511.5 2498.6,510.9 2509.8,510.4 2521.0,509.9" fill="none" stroke="#ffff00" stroke-width="4" stroke-linejoin="round" clip-path="url(#gclip)"/>
<polyline points="1960.0,1040.8 2016.1,643.0 2072.2,586.6 2128.3,561.0 2184.4,548.9 2240.5,534.2 2296.6,533.0 2352.7,514.2 2408.8,507.0 2464.9,538.4 2521.0,512.2" fill="none" stroke="#858585" stroke-width="4" stroke-linejoin="round" clip-path="url(#gclip)"/>
<rect x="1960" y="276.2" width="561" height="449.40000000000003" fill="none" stroke="#9a9a9a" stroke-width="2"/>
<line x1="1960" y1="277.2" x2="2521" y2="277.2" stroke="#9a9a9a" stroke-width="2"/>
<line x1="1960.0" y1="725.6" x2="1960.0" y2="733.6" stroke="#d8d8d8" stroke-width="2"/>
<text x="1960.0" y="755.1" font-size="21.22" textLength="11.5" lengthAdjust="spacingAndGlyphs" text-anchor="middle" fill="#dedede">0</text>
<line x1="2072.2" y1="725.6" x2="2072.2" y2="733.6" stroke="#d8d8d8" stroke-width="2"/>
<text x="2072.2" y="755.1" font-size="21.22" textLength="23.0" lengthAdjust="spacingAndGlyphs" text-anchor="middle" fill="#dedede">20</text>
<line x1="2184.4" y1="725.6" x2="2184.4" y2="733.6" stroke="#d8d8d8" stroke-width="2"/>
<text x="2184.4" y="755.1" font-size="21.22" textLength="23.0" lengthAdjust="spacingAndGlyphs" text-anchor="middle" fill="#dedede">40</text>
<line x1="2296.6" y1="725.6" x2="2296.6" y2="733.6" stroke="#d8d8d8" stroke-width="2"/>
<text x="2296.6" y="755.1" font-size="21.22" textLength="23.0" lengthAdjust="spacingAndGlyphs" text-anchor="middle" fill="#dedede">60</text>
<line x1="2408.8" y1="725.6" x2="2408.8" y2="733.6" stroke="#d8d8d8" stroke-width="2"/>
<text x="2408.8" y="755.1" font-size="21.22" textLength="23.0" lengthAdjust="spacingAndGlyphs" text-anchor="middle" fill="#dedede">80</text>
<line x1="2521.0" y1="725.6" x2="2521.0" y2="733.6" stroke="#d8d8d8" stroke-width="2"/>
<text x="2521.0" y="755.1" font-size="21.22" textLength="36.0" lengthAdjust="spacingAndGlyphs" text-anchor="middle" fill="#dedede">100</text>
<text x="1999.3" y="814.2" font-size="42.15" textLength="445.0" lengthAdjust="spacingAndGlyphs" fill="#ececec">Average Gamma: 2.187</text>
<rect x="201" y="843" width="2359" height="185" fill="#000000"/>
<line x1="334.5" y1="843" x2="334.5" y2="1028" stroke="#0c0c0c" stroke-width="1"/>
<text transform="translate(355.8,908) rotate(-90)" font-size="18.5" textLength="50" lengthAdjust="spacingAndGlyphs" fill="#f0f0f0">Actual</text>
<text transform="translate(355.8,987.8) rotate(-90)" font-size="18.5" textLength="48.8" lengthAdjust="spacingAndGlyphs" fill="#f0f0f0">Target</text>
<rect x="368.2" y="852.4" width="168" height="142.2" fill="rgb(0,0,0)" stroke="#ffffff" stroke-width="2"/>
<text x="452.2" y="1016.4" font-size="18.02" textLength="9.5" lengthAdjust="spacingAndGlyphs" text-anchor="middle" fill="#f4f4f4">0</text>
<rect x="566.9" y="852.4" width="168" height="142.2" fill="rgb(26,26,26)" stroke="#ffffff" stroke-width="2"/>
<text x="650.9" y="1016.4" font-size="18.02" textLength="19.0" lengthAdjust="spacingAndGlyphs" text-anchor="middle" fill="#f4f4f4">10</text>
<rect x="765.6" y="852.4" width="168" height="142.2" fill="rgb(51,51,51)" stroke="#ffffff" stroke-width="2"/>
<text x="849.6" y="1016.4" font-size="18.02" textLength="19.0" lengthAdjust="spacingAndGlyphs" text-anchor="middle" fill="#f4f4f4">20</text>
<rect x="964.3" y="852.4" width="168" height="142.2" fill="rgb(76,76,76)" stroke="#ffffff" stroke-width="2"/>
<text x="1048.3" y="1016.4" font-size="18.02" textLength="19.0" lengthAdjust="spacingAndGlyphs" text-anchor="middle" fill="#f4f4f4">30</text>
<rect x="1163.0" y="852.4" width="168" height="142.2" fill="rgb(102,102,102)" stroke="#ffffff" stroke-width="2"/>
<text x="1247.0" y="1016.4" font-size="18.02" textLength="19.0" lengthAdjust="spacingAndGlyphs" text-anchor="middle" fill="#f4f4f4">40</text>
<rect x="1361.7" y="852.4" width="168" height="142.2" fill="rgb(128,128,128)" stroke="#ffffff" stroke-width="2"/>
<text x="1445.7" y="1016.4" font-size="18.02" textLength="19.0" lengthAdjust="spacingAndGlyphs" text-anchor="middle" fill="#f4f4f4">50</text>
<rect x="1560.4" y="852.4" width="168" height="142.2" fill="rgb(153,153,153)" stroke="#ffffff" stroke-width="2"/>
<text x="1644.4" y="1016.4" font-size="18.02" textLength="19.0" lengthAdjust="spacingAndGlyphs" text-anchor="middle" fill="#f4f4f4">60</text>
<rect x="1759.1" y="852.4" width="168" height="142.2" fill="rgb(178,178,178)" stroke="#ffffff" stroke-width="2"/>
<text x="1843.1" y="1016.4" font-size="18.02" textLength="19.0" lengthAdjust="spacingAndGlyphs" text-anchor="middle" fill="#f4f4f4">70</text>
<rect x="1957.8" y="852.4" width="168" height="142.2" fill="rgb(204,204,204)" stroke="#ffffff" stroke-width="2"/>
<text x="2041.8" y="1016.4" font-size="18.02" textLength="19.0" lengthAdjust="spacingAndGlyphs" text-anchor="middle" fill="#f4f4f4">80</text>
<rect x="2156.5" y="852.4" width="168" height="142.2" fill="rgb(230,230,230)" stroke="#ffffff" stroke-width="2"/>
<text x="2240.5" y="1016.4" font-size="18.02" textLength="19.0" lengthAdjust="spacingAndGlyphs" text-anchor="middle" fill="#f4f4f4">90</text>
<rect x="2355.2" y="852.4" width="168" height="142.2" fill="rgb(255,255,255)" stroke="#ffffff" stroke-width="2"/>
<text x="2439.2" y="1016.4" font-size="18.02" textLength="28.5" lengthAdjust="spacingAndGlyphs" text-anchor="middle" fill="#f4f4f4">100</text>
<text x="231.0" y="1123.0" font-size="41.72" textLength="308.5" lengthAdjust="spacingAndGlyphs" fill="#ececec">Current Reading</text>
<text x="230.2" y="1182.6" font-size="35.90" textLength="144.0" lengthAdjust="spacingAndGlyphs" fill="#ececec">x: 0.3145</text>
<text x="441.6" y="1182.6" font-size="35.90" textLength="144.4" lengthAdjust="spacingAndGlyphs" fill="#ececec">y: 0.3315</text>
<text x="230.8" y="1230.2" font-size="35.90" textLength="155.6" lengthAdjust="spacingAndGlyphs" fill="#ececec">u': 0.1981</text>
<text x="441.6" y="1230.2" font-size="35.90" textLength="154.2" lengthAdjust="spacingAndGlyphs" fill="#ececec">v': 0.4699</text>
<text x="230.8" y="1278.0" font-size="35.90" textLength="243.2" lengthAdjust="spacingAndGlyphs" fill="#ececec">cd/m²: 390.832</text>
<text x="230.3" y="1328.1" font-size="36.63" textLength="216.8" lengthAdjust="spacingAndGlyphs" fill="#ececec">ΔE 2000: 1.33</text>
<text x="816.5" y="1075.4" font-size="21.80" textLength="106.7" lengthAdjust="spacingAndGlyphs" fill="#dedede">CIE 1931 xy</text>
<clipPath id="cieclip"><rect x="716" y="1082" width="356" height="235"/></clipPath>
<filter id="cieblur" x="-5%" y="-5%" width="110%" height="110%"><feGaussianBlur stdDeviation="6"/></filter>
<g clip-path="url(#cieclip)"><g filter="url(#cieblur)"><rect x="696.0" y="1062.0" width="17.1" height="17.8" fill="#60ffcf"/><rect x="712.5" y="1062.0" width="17.1" height="17.8" fill="#6dffce"/><rect x="729.0" y="1062.0" width="17.1" height="17.8" fill="#78ffcd"/><rect x="745.5" y="1062.0" width="17.1" height="17.8" fill="#82ffcc"/><rect x="762.0" y="1062.0" width="17.1" height="17.8" fill="#8cffcc"/><rect x="778.5" y="1062.0" width="17.1" height="17.8" fill="#95ffcb"/><rect x="795.0" y="1062.0" width="17.1" height="17.8" fill="#9effca"/><rect x="811.5" y="1062.0" width="17.1" height="17.8" fill="#a7ffc9"/><rect x="828.0" y="1062.0" width="17.1" height="17.8" fill="#afffc8"/><rect x="844.5" y="1062.0" width="17.1" height="17.8" fill="#b7ffc7"/><rect x="861.0" y="1062.0" width="17.1" height="17.8" fill="#bfffc6"/><rect x="877.5" y="1062.0" width="17.1" height="17.8" fill="#c7ffc5"/><rect x="894.0" y="1062.0" width="17.1" height="17.8" fill="#cfffc4"/><rect x="910.5" y="1062.0" width="17.1" height="17.8" fill="#d6ffc3"/><rect x="927.0" y="1062.0" width="17.1" height="17.8" fill="#deffc2"/><rect x="943.5" y="1062.0" width="17.1" height="17.8" fill="#e5ffc1"/><rect x="960.0" y="1062.0" width="17.1" height="17.8" fill="#ecffbf"/><rect x="976.5" y="1062.0" width="17.1" height="17.8" fill="#f4ffbe"/><rect x="993.0" y="1062.0" width="17.1" height="17.8" fill="#fbffbd"/><rect x="1009.5" y="1062.0" width="17.1" height="17.8" fill="#fffbb8"/><rect x="1026.0" y="1062.0" width="17.1" height="17.8" fill="#fff4b2"/><rect x="1042.5" y="1062.0" width="17.1" height="17.8" fill="#ffedac"/><rect x="1059.0" y="1062.0" width="17.1" height="17.8" fill="#ffe7a6"/><rect x="1075.5" y="1062.0" width="17.1" height="17.8" fill="#ffe1a0"/><rect x="696.0" y="1079.2" width="17.1" height="17.8" fill="#67ffd4"/><rect x="712.5" y="1079.2" width="17.1" height="17.8" fill="#73ffd4"/><rect x="729.0" y="1079.2" width="17.1" height="17.8" fill="#7effd3"/><rect x="745.5" y="1079.2" width="17.1" height="17.8" fill="#88ffd2"/><rect x="762.0" y="1079.2" width="17.1" height="17.8" fill="#92ffd2"/><rect x="778.5" y="1079.2" width="17.1" height="17.8" fill="#9bffd1"/><rect x="795.0" y="1079.2" width="17.1" height="17.8" fill="#a4ffd0"/><rect x="811.5" y="1079.2" width="17.1" height="17.8" fill="#adffcf"/><rect x="828.0" y="1079.2" width="17.1" height="17.8" fill="#b5ffcf"/><rect x="844.5" y="1079.2" width="17.1" height="17.8" fill="#bdffce"/><rect x="861.0" y="1079.2" width="17.1" height="17.8" fill="#c5ffcd"/><rect x="877.5" y="1079.2" width="17.1" height="17.8" fill="#cdffcc"/><rect x="894.0" y="1079.2" width="17.1" height="17.8" fill="#d5ffcb"/><rect x="910.5" y="1079.2" width="17.1" height="17.8" fill="#dcffca"/><rect x="927.0" y="1079.2" width="17.1" height="17.8" fill="#e4ffc9"/><rect x="943.5" y="1079.2" width="17.1" height="17.8" fill="#ecffc8"/><rect x="960.0" y="1079.2" width="17.1" height="17.8" fill="#f3ffc7"/><rect x="976.5" y="1079.2" width="17.1" height="17.8" fill="#fbffc6"/><rect x="993.0" y="1079.2" width="17.1" height="17.8" fill="#fffbc2"/><rect x="1009.5" y="1079.2" width="17.1" height="17.8" fill="#fff4bb"/><rect x="1026.0" y="1079.2" width="17.1" height="17.8" fill="#ffedb4"/><rect x="1042.5" y="1079.2" width="17.1" height="17.8" fill="#ffe6ae"/><rect x="1059.0" y="1079.2" width="17.1" height="17.8" fill="#ffe0a8"/><rect x="1075.5" y="1079.2" width="17.1" height="17.8" fill="#ffdba3"/><rect x="696.0" y="1096.4" width="17.1" height="17.8" fill="#6effda"/><rect x="712.5" y="1096.4" width="17.1" height="17.8" fill="#7affda"/><rect x="729.0" y="1096.4" width="17.1" height="17.8" fill="#84ffd9"/><rect x="745.5" y="1096.4" width="17.1" height="17.8" fill="#8fffd9"/><rect x="762.0" y="1096.4" width="17.1" height="17.8" fill="#98ffd8"/><rect x="778.5" y="1096.4" width="17.1" height="17.8" fill="#a1ffd7"/><rect x="795.0" y="1096.4" width="17.1" height="17.8" fill="#aaffd7"/><rect x="811.5" y="1096.4" width="17.1" height="17.8" fill="#b3ffd6"/><rect x="828.0" y="1096.4" width="17.1" height="17.8" fill="#bbffd5"/><rect x="844.5" y="1096.4" width="17.1" height="17.8" fill="#c3ffd5"/><rect x="861.0" y="1096.4" width="17.1" height="17.8" fill="#cbffd4"/><rect x="877.5" y="1096.4" width="17.1" height="17.8" fill="#d3ffd3"/><rect x="894.0" y="1096.4" width="17.1" height="17.8" fill="#dbffd2"/><rect x="910.5" y="1096.4" width="17.1" height="17.8" fill="#e3ffd1"/><rect x="927.0" y="1096.4" width="17.1" height="17.8" fill="#ebffd0"/><rect x="943.5" y="1096.4" width="17.1" height="17.8" fill="#f3ffcf"/><rect x="960.0" y="1096.4" width="17.1" height="17.8" fill="#faffce"/><rect x="976.5" y="1096.4" width="17.1" height="17.8" fill="#fffbcb"/><rect x="993.0" y="1096.4" width="17.1" height="17.8" fill="#fff4c4"/><rect x="1009.5" y="1096.4" width="17.1" height="17.8" fill="#ffedbd"/><rect x="1026.0" y="1096.4" width="17.1" height="17.8" fill="#ffe6b7"/><rect x="1042.5" y="1096.4" width="17.1" height="17.8" fill="#ffe0b1"/><rect x="1059.0" y="1096.4" width="17.1" height="17.8" fill="#ffdaab"/><rect x="1075.5" y="1096.4" width="17.1" height="17.8" fill="#ffd4a5"/><rect x="696.0" y="1113.6" width="17.1" height="17.8" fill="#75ffe0"/><rect x="712.5" y="1113.6" width="17.1" height="17.8" fill="#80ffe0"/><rect x="729.0" y="1113.6" width="17.1" height="17.8" fill="#8bffdf"/><rect x="745.5" y="1113.6" width="17.1" height="17.8" fill="#95ffdf"/><rect x="762.0" y="1113.6" width="17.1" height="17.8" fill="#9effde"/><rect x="778.5" y="1113.6" width="17.1" height="17.8" fill="#a7ffde"/><rect x="795.0" y="1113.6" width="17.1" height="17.8" fill="#b0ffdd"/><rect x="811.5" y="1113.6" width="17.1" height="17.8" fill="#b9ffdd"/><rect x="828.0" y="1113.6" width="17.1" height="17.8" fill="#c1ffdc"/><rect x="844.5" y="1113.6" width="17.1" height="17.8" fill="#caffdc"/><rect x="861.0" y="1113.6" width="17.1" height="17.8" fill="#d2ffdb"/><rect x="877.5" y="1113.6" width="17.1" height="17.8" fill="#daffda"/><rect x="894.0" y="1113.6" width="17.1" height="17.8" fill="#e2ffda"/><rect x="910.5" y="1113.6" width="17.1" height="17.8" fill="#eaffd9"/><rect x="927.0" y="1113.6" width="17.1" height="17.8" fill="#f2ffd8"/><rect x="943.5" y="1113.6" width="17.1" height="17.8" fill="#faffd7"/><rect x="960.0" y="1113.6" width="17.1" height="17.8" fill="#fffbd4"/><rect x="976.5" y="1113.6" width="17.1" height="17.8" fill="#fff4cd"/><rect x="993.0" y="1113.6" width="17.1" height="17.8" fill="#ffedc6"/><rect x="1009.5" y="1113.6" width="17.1" height="17.8" fill="#ffe6bf"/><rect x="1026.0" y="1113.6" width="17.1" height="17.8" fill="#ffe0b9"/><rect x="1042.5" y="1113.6" width="17.1" height="17.8" fill="#ffd9b3"/><rect x="1059.0" y="1113.6" width="17.1" height="17.8" fill="#ffd4ad"/><rect x="1075.5" y="1113.6" width="17.1" height="17.8" fill="#ffcea8"/><rect x="696.0" y="1130.8" width="17.1" height="17.8" fill="#7bffe7"/><rect x="712.5" y="1130.8" width="17.1" height="17.8" fill="#87ffe6"/><rect x="729.0" y="1130.8" width="17.1" height="17.8" fill="#91ffe6"/><rect x="745.5" y="1130.8" width="17.1" height="17.8" fill="#9bffe6"/><rect x="762.0" y="1130.8" width="17.1" height="17.8" fill="#a5ffe5"/><rect x="778.5" y="1130.8" width="17.1" height="17.8" fill="#aeffe5"/><rect x="795.0" y="1130.8" width="17.1" height="17.8" fill="#b7ffe4"/><rect x="811.5" y="1130.8" width="17.1" height="17.8" fill="#bfffe4"/><rect x="828.0" y="1130.8" width="17.1" height="17.8" fill="#c8ffe3"/><rect x="844.5" y="1130.8" width="17.1" height="17.8" fill="#d0ffe3"/><rect x="861.0" y="1130.8" width="17.1" height="17.8" fill="#d9ffe2"/><rect x="877.5" y="1130.8" width="17.1" height="17.8" fill="#e1ffe2"/><rect x="894.0" y="1130.8" width="17.1" height="17.8" fill="#e9ffe1"/><rect x="910.5" y="1130.8" width="17.1" height="17.8" fill="#f1ffe1"/><rect x="927.0" y="1130.8" width="17.1" height="17.8" fill="#f9ffe0"/><rect x="943.5" y="1130.8" width="17.1" height="17.8" fill="#fffcdd"/><rect x="960.0" y="1130.8" width="17.1" height="17.8" fill="#fff4d5"/><rect x="976.5" y="1130.8" width="17.1" height="17.8" fill="#ffedce"/><rect x="993.0" y="1130.8" width="17.1" height="17.8" fill="#ffe6c8"/><rect x="1009.5" y="1130.8" width="17.1" height="17.8" fill="#ffdfc1"/><rect x="1026.0" y="1130.8" width="17.1" height="17.8" fill="#ffd9bb"/><rect x="1042.5" y="1130.8" width="17.1" height="17.8" fill="#ffd3b5"/><rect x="1059.0" y="1130.8" width="17.1" height="17.8" fill="#ffcdb0"/><rect x="1075.5" y="1130.8" width="17.1" height="17.8" fill="#ffc8aa"/><rect x="696.0" y="1147.9" width="17.1" height="17.8" fill="#82ffed"/><rect x="712.5" y="1147.9" width="17.1" height="17.8" fill="#8dffed"/><rect x="729.0" y="1147.9" width="17.1" height="17.8" fill="#98ffed"/><rect x="745.5" y="1147.9" width="17.1" height="17.8" fill="#a1ffec"/><rect x="762.0" y="1147.9" width="17.1" height="17.8" fill="#abffec"/><rect x="778.5" y="1147.9" width="17.1" height="17.8" fill="#b4ffec"/><rect x="795.0" y="1147.9" width="17.1" height="17.8" fill="#bdffec"/><rect x="811.5" y="1147.9" width="17.1" height="17.8" fill="#c6ffeb"/><rect x="828.0" y="1147.9" width="17.1" height="17.8" fill="#cfffeb"/><rect x="844.5" y="1147.9" width="17.1" height="17.8" fill="#d7ffea"/><rect x="861.0" y="1147.9" width="17.1" height="17.8" fill="#e0ffea"/><rect x="877.5" y="1147.9" width="17.1" height="17.8" fill="#e8ffea"/><rect x="894.0" y="1147.9" width="17.1" height="17.8" fill="#f1ffe9"/><rect x="910.5" y="1147.9" width="17.1" height="17.8" fill="#f9ffe9"/><rect x="927.0" y="1147.9" width="17.1" height="17.8" fill="#fffce6"/><rect x="943.5" y="1147.9" width="17.1" height="17.8" fill="#fff4de"/><rect x="960.0" y="1147.9" width="17.1" height="17.8" fill="#ffecd7"/><rect x="976.5" y="1147.9" width="17.1" height="17.8" fill="#ffe5d0"/><rect x="993.0" y="1147.9" width="17.1" height="17.8" fill="#ffdfca"/><rect x="1009.5" y="1147.9" width="17.1" height="17.8" fill="#ffd8c3"/><rect x="1026.0" y="1147.9" width="17.1" height="17.8" fill="#ffd2bd"/><rect x="1042.5" y="1147.9" width="17.1" height="17.8" fill="#ffccb8"/><rect x="1059.0" y="1147.9" width="17.1" height="17.8" fill="#ffc7b2"/><rect x="1075.5" y="1147.9" width="17.1" height="17.8" fill="#ffc1ad"/><rect x="696.0" y="1165.1" width="17.1" height="17.8" fill="#89fff4"/><rect x="712.5" y="1165.1" width="17.1" height="17.8" fill="#94fff4"/><rect x="729.0" y="1165.1" width="17.1" height="17.8" fill="#9efff4"/><rect x="745.5" y="1165.1" width="17.1" height="17.8" fill="#a8fff4"/><rect x="762.0" y="1165.1" width="17.1" height="17.8" fill="#b2fff3"/><rect x="778.5" y="1165.1" width="17.1" height="17.8" fill="#bbfff3"/><rect x="795.0" y="1165.1" width="17.1" height="17.8" fill="#c4fff3"/><rect x="811.5" y="1165.1" width="17.1" height="17.8" fill="#cdfff3"/><rect x="828.0" y="1165.1" width="17.1" height="17.8" fill="#d6fff3"/><rect x="844.5" y="1165.1" width="17.1" height="17.8" fill="#dffff2"/><rect x="861.0" y="1165.1" width="17.1" height="17.8" fill="#e7fff2"/><rect x="877.5" y="1165.1" width="17.1" height="17.8" fill="#f0fff2"/><rect x="894.0" y="1165.1" width="17.1" height="17.8" fill="#f8fff2"/><rect x="910.5" y="1165.1" width="17.1" height="17.8" fill="#fffcef"/><rect x="927.0" y="1165.1" width="17.1" height="17.8" fill="#fff4e7"/><rect x="943.5" y="1165.1" width="17.1" height="17.8" fill="#ffece0"/><rect x="960.0" y="1165.1" width="17.1" height="17.8" fill="#ffe5d9"/><rect x="976.5" y="1165.1" width="17.1" height="17.8" fill="#ffded2"/><rect x="993.0" y="1165.1" width="17.1" height="17.8" fill="#ffd8cb"/><rect x="1009.5" y="1165.1" width="17.1" height="17.8" fill="#ffd1c5"/><rect x="1026.0" y="1165.1" width="17.1" height="17.8" fill="#ffcbbf"/><rect x="1042.5" y="1165.1" width="17.1" height="17.8" fill="#ffc6ba"/><rect x="1059.0" y="1165.1" width="17.1" height="17.8" fill="#ffc0b4"/><rect x="1075.5" y="1165.1" width="17.1" height="17.8" fill="#ffbbaf"/><rect x="696.0" y="1182.3" width="17.1" height="17.8" fill="#90fffb"/><rect x="712.5" y="1182.3" width="17.1" height="17.8" fill="#9bfffb"/><rect x="729.0" y="1182.3" width="17.1" height="17.8" fill="#a5fffb"/><rect x="745.5" y="1182.3" width="17.1" height="17.8" fill="#affffb"/><rect x="762.0" y="1182.3" width="17.1" height="17.8" fill="#b9fffb"/><rect x="778.5" y="1182.3" width="17.1" height="17.8" fill="#c2fffb"/><rect x="795.0" y="1182.3" width="17.1" height="17.8" fill="#cbfffb"/><rect x="811.5" y="1182.3" width="17.1" height="17.8" fill="#d4fffb"/><rect x="828.0" y="1182.3" width="17.1" height="17.8" fill="#ddfffb"/><rect x="844.5" y="1182.3" width="17.1" height="17.8" fill="#e6fffb"/><rect x="861.0" y="1182.3" width="17.1" height="17.8" fill="#effffb"/><rect x="877.5" y="1182.3" width="17.1" height="17.8" fill="#f8fffb"/><rect x="894.0" y="1182.3" width="17.1" height="17.8" fill="#fffcf9"/><rect x="910.5" y="1182.3" width="17.1" height="17.8" fill="#fff4f0"/><rect x="927.0" y="1182.3" width="17.1" height="17.8" fill="#ffece8"/><rect x="943.5" y="1182.3" width="17.1" height="17.8" fill="#ffe5e1"/><rect x="960.0" y="1182.3" width="17.1" height="17.8" fill="#ffdeda"/><rect x="976.5" y="1182.3" width="17.1" height="17.8" fill="#ffd7d3"/><rect x="993.0" y="1182.3" width="17.1" height="17.8" fill="#ffd1cd"/><rect x="1009.5" y="1182.3" width="17.1" height="17.8" fill="#ffcbc7"/><rect x="1026.0" y="1182.3" width="17.1" height="17.8" fill="#ffc5c1"/><rect x="1042.5" y="1182.3" width="17.1" height="17.8" fill="#ffbfbc"/><rect x="1059.0" y="1182.3" width="17.1" height="17.8" fill="#ffbab6"/><rect x="1075.5" y="1182.3" width="17.1" height="17.8" fill="#ffb5b1"/><rect x="696.0" y="1199.5" width="17.1" height="17.8" fill="#94faff"/><rect x="712.5" y="1199.5" width="17.1" height="17.8" fill="#9ffaff"/><rect x="729.0" y="1199.5" width="17.1" height="17.8" fill="#a9faff"/><rect x="745.5" y="1199.5" width="17.1" height="17.8" fill="#b3faff"/><rect x="762.0" y="1199.5" width="17.1" height="17.8" fill="#bcfaff"/><rect x="778.5" y="1199.5" width="17.1" height="17.8" fill="#c6faff"/><rect x="795.0" y="1199.5" width="17.1" height="17.8" fill="#cffaff"/><rect x="811.5" y="1199.5" width="17.1" height="17.8" fill="#d8faff"/><rect x="828.0" y="1199.5" width="17.1" height="17.8" fill="#e1faff"/><rect x="844.5" y="1199.5" width="17.1" height="17.8" fill="#eafaff"/><rect x="861.0" y="1199.5" width="17.1" height="17.8" fill="#f2f9ff"/><rect x="877.5" y="1199.5" width="17.1" height="17.8" fill="#fbf9ff"/><rect x="894.0" y="1199.5" width="17.1" height="17.8" fill="#fff4f9"/><rect x="910.5" y="1199.5" width="17.1" height="17.8" fill="#ffecf1"/><rect x="927.0" y="1199.5" width="17.1" height="17.8" fill="#ffe4e9"/><rect x="943.5" y="1199.5" width="17.1" height="17.8" fill="#ffdde2"/><rect x="960.0" y="1199.5" width="17.1" height="17.8" fill="#ffd6db"/><rect x="976.5" y="1199.5" width="17.1" height="17.8" fill="#ffd0d5"/><rect x="993.0" y="1199.5" width="17.1" height="17.8" fill="#ffcacf"/><rect x="1009.5" y="1199.5" width="17.1" height="17.8" fill="#ffc4c9"/><rect x="1026.0" y="1199.5" width="17.1" height="17.8" fill="#ffbec3"/><rect x="1042.5" y="1199.5" width="17.1" height="17.8" fill="#ffb8bd"/><rect x="1059.0" y="1199.5" width="17.1" height="17.8" fill="#ffb3b8"/><rect x="1075.5" y="1199.5" width="17.1" height="17.8" fill="#ffaeb3"/><rect x="696.0" y="1216.7" width="17.1" height="17.8" fill="#97f3ff"/><rect x="712.5" y="1216.7" width="17.1" height="17.8" fill="#a1f3ff"/><rect x="729.0" y="1216.7" width="17.1" height="17.8" fill="#abf3ff"/><rect x="745.5" y="1216.7" width="17.1" height="17.8" fill="#b4f3ff"/><rect x="762.0" y="1216.7" width="17.1" height="17.8" fill="#bef2ff"/><rect x="778.5" y="1216.7" width="17.1" height="17.8" fill="#c7f2ff"/><rect x="795.0" y="1216.7" width="17.1" height="17.8" fill="#cff2ff"/><rect x="811.5" y="1216.7" width="17.1" height="17.8" fill="#d8f2ff"/><rect x="828.0" y="1216.7" width="17.1" height="17.8" fill="#e1f1ff"/><rect x="844.5" y="1216.7" width="17.1" height="17.8" fill="#e9f1ff"/><rect x="861.0" y="1216.7" width="17.1" height="17.8" fill="#f2f1ff"/><rect x="877.5" y="1216.7" width="17.1" height="17.8" fill="#fbf0ff"/><rect x="894.0" y="1216.7" width="17.1" height="17.8" fill="#ffecfa"/><rect x="910.5" y="1216.7" width="17.1" height="17.8" fill="#ffe4f2"/><rect x="927.0" y="1216.7" width="17.1" height="17.8" fill="#ffddeb"/><rect x="943.5" y="1216.7" width="17.1" height="17.8" fill="#ffd6e3"/><rect x="960.0" y="1216.7" width="17.1" height="17.8" fill="#ffcfdd"/><rect x="976.5" y="1216.7" width="17.1" height="17.8" fill="#ffc9d6"/><rect x="993.0" y="1216.7" width="17.1" height="17.8" fill="#ffc2d0"/><rect x="1009.5" y="1216.7" width="17.1" height="17.8" fill="#ffbdca"/><rect x="1026.0" y="1216.7" width="17.1" height="17.8" fill="#ffb7c5"/><rect x="1042.5" y="1216.7" width="17.1" height="17.8" fill="#ffb2bf"/><rect x="1059.0" y="1216.7" width="17.1" height="17.8" fill="#ffacba"/><rect x="1075.5" y="1216.7" width="17.1" height="17.8" fill="#ffa7b5"/><rect x="696.0" y="1233.9" width="17.1" height="17.8" fill="#99ecff"/><rect x="712.5" y="1233.9" width="17.1" height="17.8" fill="#a3ecff"/><rect x="729.0" y="1233.9" width="17.1" height="17.8" fill="#adebff"/><rect x="745.5" y="1233.9" width="17.1" height="17.8" fill="#b6ebff"/><rect x="762.0" y="1233.9" width="17.1" height="17.8" fill="#bfebff"/><rect x="778.5" y="1233.9" width="17.1" height="17.8" fill="#c8eaff"/><rect x="795.0" y="1233.9" width="17.1" height="17.8" fill="#d0eaff"/><rect x="811.5" y="1233.9" width="17.1" height="17.8" fill="#d9e9ff"/><rect x="828.0" y="1233.9" width="17.1" height="17.8" fill="#e1e9ff"/><rect x="844.5" y="1233.9" width="17.1" height="17.8" fill="#e9e8ff"/><rect x="861.0" y="1233.9" width="17.1" height="17.8" fill="#f2e8ff"/><rect x="877.5" y="1233.9" width="17.1" height="17.8" fill="#fae7ff"/><rect x="894.0" y="1233.9" width="17.1" height="17.8" fill="#ffe4fb"/><rect x="910.5" y="1233.9" width="17.1" height="17.8" fill="#ffdcf3"/><rect x="927.0" y="1233.9" width="17.1" height="17.8" fill="#ffd5ec"/><rect x="943.5" y="1233.9" width="17.1" height="17.8" fill="#ffcee5"/><rect x="960.0" y="1233.9" width="17.1" height="17.8" fill="#ffc7de"/><rect x="976.5" y="1233.9" width="17.1" height="17.8" fill="#ffc1d8"/><rect x="993.0" y="1233.9" width="17.1" height="17.8" fill="#ffbbd2"/><rect x="1009.5" y="1233.9" width="17.1" height="17.8" fill="#ffb6cc"/><rect x="1026.0" y="1233.9" width="17.1" height="17.8" fill="#ffb0c6"/><rect x="1042.5" y="1233.9" width="17.1" height="17.8" fill="#ffabc1"/><rect x="1059.0" y="1233.9" width="17.1" height="17.8" fill="#ffa6bc"/><rect x="1075.5" y="1233.9" width="17.1" height="17.8" fill="#ffa1b7"/><rect x="696.0" y="1251.1" width="17.1" height="17.8" fill="#9ce5ff"/><rect x="712.5" y="1251.1" width="17.1" height="17.8" fill="#a5e4ff"/><rect x="729.0" y="1251.1" width="17.1" height="17.8" fill="#aee4ff"/><rect x="745.5" y="1251.1" width="17.1" height="17.8" fill="#b7e3ff"/><rect x="762.0" y="1251.1" width="17.1" height="17.8" fill="#c0e3ff"/><rect x="778.5" y="1251.1" width="17.1" height="17.8" fill="#c8e2ff"/><rect x="795.0" y="1251.1" width="17.1" height="17.8" fill="#d1e2ff"/><rect x="811.5" y="1251.1" width="17.1" height="17.8" fill="#d9e1ff"/><rect x="828.0" y="1251.1" width="17.1" height="17.8" fill="#e1e1ff"/><rect x="844.5" y="1251.1" width="17.1" height="17.8" fill="#e9e0ff"/><rect x="861.0" y="1251.1" width="17.1" height="17.8" fill="#f1dfff"/><rect x="877.5" y="1251.1" width="17.1" height="17.8" fill="#fadfff"/><rect x="894.0" y="1251.1" width="17.1" height="17.8" fill="#ffdbfb"/><rect x="910.5" y="1251.1" width="17.1" height="17.8" fill="#ffd4f4"/><rect x="927.0" y="1251.1" width="17.1" height="17.8" fill="#ffcded"/><rect x="943.5" y="1251.1" width="17.1" height="17.8" fill="#ffc6e6"/><rect x="960.0" y="1251.1" width="17.1" height="17.8" fill="#ffc0df"/><rect x="976.5" y="1251.1" width="17.1" height="17.8" fill="#ffbad9"/><rect x="993.0" y="1251.1" width="17.1" height="17.8" fill="#ffb4d3"/><rect x="1009.5" y="1251.1" width="17.1" height="17.8" fill="#ffaecd"/><rect x="1026.0" y="1251.1" width="17.1" height="17.8" fill="#ffa9c8"/><rect x="1042.5" y="1251.1" width="17.1" height="17.8" fill="#ffa4c3"/><rect x="1059.0" y="1251.1" width="17.1" height="17.8" fill="#ff9fbe"/><rect x="1075.5" y="1251.1" width="17.1" height="17.8" fill="#ff9ab9"/><rect x="696.0" y="1268.2" width="17.1" height="17.8" fill="#9edeff"/><rect x="712.5" y="1268.2" width="17.1" height="17.8" fill="#a7ddff"/><rect x="729.0" y="1268.2" width="17.1" height="17.8" fill="#b0ddff"/><rect x="745.5" y="1268.2" width="17.1" height="17.8" fill="#b8dcff"/><rect x="762.0" y="1268.2" width="17.1" height="17.8" fill="#c1dbff"/><rect x="778.5" y="1268.2" width="17.1" height="17.8" fill="#c9dbff"/><rect x="795.0" y="1268.2" width="17.1" height="17.8" fill="#d1daff"/><rect x="811.5" y="1268.2" width="17.1" height="17.8" fill="#d9d9ff"/><rect x="828.0" y="1268.2" width="17.1" height="17.8" fill="#e1d8ff"/><rect x="844.5" y="1268.2" width="17.1" height="17.8" fill="#e9d8ff"/><rect x="861.0" y="1268.2" width="17.1" height="17.8" fill="#f1d7ff"/><rect x="877.5" y="1268.2" width="17.1" height="17.8" fill="#f9d6ff"/><rect x="894.0" y="1268.2" width="17.1" height="17.8" fill="#ffd3fc"/><rect x="910.5" y="1268.2" width="17.1" height="17.8" fill="#ffccf5"/><rect x="927.0" y="1268.2" width="17.1" height="17.8" fill="#ffc5ed"/><rect x="943.5" y="1268.2" width="17.1" height="17.8" fill="#ffbfe7"/><rect x="960.0" y="1268.2" width="17.1" height="17.8" fill="#ffb8e0"/><rect x="976.5" y="1268.2" width="17.1" height="17.8" fill="#ffb2da"/><rect x="993.0" y="1268.2" width="17.1" height="17.8" fill="#ffadd4"/><rect x="1009.5" y="1268.2" width="17.1" height="17.8" fill="#ffa7cf"/><rect x="1026.0" y="1268.2" width="17.1" height="17.8" fill="#ffa2c9"/><rect x="1042.5" y="1268.2" width="17.1" height="17.8" fill="#ff9dc4"/><rect x="1059.0" y="1268.2" width="17.1" height="17.8" fill="#ff97bf"/><rect x="1075.5" y="1268.2" width="17.1" height="17.8" fill="#ff93ba"/><rect x="696.0" y="1285.4" width="17.1" height="17.8" fill="#a0d7ff"/><rect x="712.5" y="1285.4" width="17.1" height="17.8" fill="#a9d6ff"/><rect x="729.0" y="1285.4" width="17.1" height="17.8" fill="#b1d5ff"/><rect x="745.5" y="1285.4" width="17.1" height="17.8" fill="#bad4ff"/><rect x="762.0" y="1285.4" width="17.1" height="17.8" fill="#c2d4ff"/><rect x="778.5" y="1285.4" width="17.1" height="17.8" fill="#cad3ff"/><rect x="795.0" y="1285.4" width="17.1" height="17.8" fill="#d2d2ff"/><rect x="811.5" y="1285.4" width="17.1" height="17.8" fill="#dad1ff"/><rect x="828.0" y="1285.4" width="17.1" height="17.8" fill="#e2d0ff"/><rect x="844.5" y="1285.4" width="17.1" height="17.8" fill="#e9cfff"/><rect x="861.0" y="1285.4" width="17.1" height="17.8" fill="#f1ceff"/><rect x="877.5" y="1285.4" width="17.1" height="17.8" fill="#f9cdff"/><rect x="894.0" y="1285.4" width="17.1" height="17.8" fill="#ffcbfd"/><rect x="910.5" y="1285.4" width="17.1" height="17.8" fill="#ffc4f5"/><rect x="927.0" y="1285.4" width="17.1" height="17.8" fill="#ffbdee"/><rect x="943.5" y="1285.4" width="17.1" height="17.8" fill="#ffb7e8"/><rect x="960.0" y="1285.4" width="17.1" height="17.8" fill="#ffb1e1"/><rect x="976.5" y="1285.4" width="17.1" height="17.8" fill="#ffabdb"/><rect x="993.0" y="1285.4" width="17.1" height="17.8" fill="#ffa5d6"/><rect x="1009.5" y="1285.4" width="17.1" height="17.8" fill="#ffa0d0"/><rect x="1026.0" y="1285.4" width="17.1" height="17.8" fill="#ff9acb"/><rect x="1042.5" y="1285.4" width="17.1" height="17.8" fill="#ff95c6"/><rect x="1059.0" y="1285.4" width="17.1" height="17.8" fill="#ff90c1"/><rect x="1075.5" y="1285.4" width="17.1" height="17.8" fill="#ff8bbc"/><rect x="696.0" y="1302.6" width="17.1" height="17.8" fill="#a2d0ff"/><rect x="712.5" y="1302.6" width="17.1" height="17.8" fill="#aacfff"/><rect x="729.0" y="1302.6" width="17.1" height="17.8" fill="#b3ceff"/><rect x="745.5" y="1302.6" width="17.1" height="17.8" fill="#bbcdff"/><rect x="762.0" y="1302.6" width="17.1" height="17.8" fill="#c3ccff"/><rect x="778.5" y="1302.6" width="17.1" height="17.8" fill="#cbcbff"/><rect x="795.0" y="1302.6" width="17.1" height="17.8" fill="#d2caff"/><rect x="811.5" y="1302.6" width="17.1" height="17.8" fill="#dac9ff"/><rect x="828.0" y="1302.6" width="17.1" height="17.8" fill="#e2c8ff"/><rect x="844.5" y="1302.6" width="17.1" height="17.8" fill="#e9c7ff"/><rect x="861.0" y="1302.6" width="17.1" height="17.8" fill="#f1c6ff"/><rect x="877.5" y="1302.6" width="17.1" height="17.8" fill="#f8c5ff"/><rect x="894.0" y="1302.6" width="17.1" height="17.8" fill="#ffc2fd"/><rect x="910.5" y="1302.6" width="17.1" height="17.8" fill="#ffbcf6"/><rect x="927.0" y="1302.6" width="17.1" height="17.8" fill="#ffb5ef"/><rect x="943.5" y="1302.6" width="17.1" height="17.8" fill="#ffafe9"/><rect x="960.0" y="1302.6" width="17.1" height="17.8" fill="#ffa9e3"/><rect x="976.5" y="1302.6" width="17.1" height="17.8" fill="#ffa3dd"/><rect x="993.0" y="1302.6" width="17.1" height="17.8" fill="#ff9dd7"/><rect x="1009.5" y="1302.6" width="17.1" height="17.8" fill="#ff98d2"/><rect x="1026.0" y="1302.6" width="17.1" height="17.8" fill="#ff93cc"/><rect x="1042.5" y="1302.6" width="17.1" height="17.8" fill="#ff8ec7"/><rect x="1059.0" y="1302.6" width="17.1" height="17.8" fill="#ff89c2"/><rect x="1075.5" y="1302.6" width="17.1" height="17.8" fill="#ff84be"/><rect x="696.0" y="1319.8" width="17.1" height="17.8" fill="#a3c9ff"/><rect x="712.5" y="1319.8" width="17.1" height="17.8" fill="#acc8ff"/><rect x="729.0" y="1319.8" width="17.1" height="17.8" fill="#b4c7ff"/><rect x="745.5" y="1319.8" width="17.1" height="17.8" fill="#bcc6ff"/><rect x="762.0" y="1319.8" width="17.1" height="17.8" fill="#c4c5ff"/><rect x="778.5" y="1319.8" width="17.1" height="17.8" fill="#cbc4ff"/><rect x="795.0" y="1319.8" width="17.1" height="17.8" fill="#d3c2ff"/><rect x="811.5" y="1319.8" width="17.1" height="17.8" fill="#dac1ff"/><rect x="828.0" y="1319.8" width="17.1" height="17.8" fill="#e2c0ff"/><rect x="844.5" y="1319.8" width="17.1" height="17.8" fill="#e9bfff"/><rect x="861.0" y="1319.8" width="17.1" height="17.8" fill="#f0bdff"/><rect x="877.5" y="1319.8" width="17.1" height="17.8" fill="#f8bcff"/><rect x="894.0" y="1319.8" width="17.1" height="17.8" fill="#ffbafe"/><rect x="910.5" y="1319.8" width="17.1" height="17.8" fill="#ffb3f7"/><rect x="927.0" y="1319.8" width="17.1" height="17.8" fill="#ffadf0"/><rect x="943.5" y="1319.8" width="17.1" height="17.8" fill="#ffa7ea"/><rect x="960.0" y="1319.8" width="17.1" height="17.8" fill="#ffa1e4"/><rect x="976.5" y="1319.8" width="17.1" height="17.8" fill="#ff9bde"/><rect x="993.0" y="1319.8" width="17.1" height="17.8" fill="#ff96d8"/><rect x="1009.5" y="1319.8" width="17.1" height="17.8" fill="#ff90d3"/><rect x="1026.0" y="1319.8" width="17.1" height="17.8" fill="#ff8bce"/><rect x="1042.5" y="1319.8" width="17.1" height="17.8" fill="#ff86c9"/><rect x="1059.0" y="1319.8" width="17.1" height="17.8" fill="#ff81c4"/><rect x="1075.5" y="1319.8" width="17.1" height="17.8" fill="#ff7cbf"/></g>
<polyline points="1233.3,1036.5 1208.8,1048.2 1185.5,1059.6 1163.1,1070.8 1141.8,1081.7 1121.3,1092.4 1101.8,1102.8 1083.0,1112.9 1065.0,1122.8 1047.8,1132.4 1031.2,1141.8 1015.3,1151.0 1000.1,1159.9 985.4,1168.6 971.3,1177.0 957.8,1185.3 944.7,1193.3 932.1,1201.1 920.0,1208.7 908.3,1216.1 897.1,1223.3 886.2,1230.3 875.7,1237.2 865.6,1243.9 855.8,1250.3 846.4,1256.7 837.2,1262.8 828.4,1268.8 819.9,1274.7 811.6,1280.4 803.6,1286.0 795.8,1291.4 788.3,1296.7 781.0,1301.8 773.9,1306.9 767.1,1311.8 760.4,1316.6 753.9,1321.2 747.7,1325.8 741.6,1330.2 735.6,1334.6 729.9,1338.8 724.3,1343.0 718.8,1347.0 713.5,1351.0 708.4,1354.9 703.3,1358.6 698.5,1362.3 693.7,1366.0 689.1,1369.5 684.5,1373.0 680.1,1376.3 675.8,1379.6 671.6,1382.9 667.6,1386.0 663.6,1389.1 659.7,1392.2 655.9,1395.2 652.2,1398.1 648.5,1400.9 645.0,1403.7 641.5,1406.4 638.2,1409.1 634.9,1411.8 631.6,1414.3 628.5,1416.8 625.4,1419.3 622.4,1421.7 619.4,1424.1 616.5,1426.5 613.7,1428.8 610.9,1431.0 608.2,1433.2 605.5,1435.4 602.9,1437.5" fill="none" stroke="#000" stroke-width="4.5"/>
<rect x="883" y="1189" width="17" height="17" fill="#fff" stroke="#000" stroke-width="2"/>
<circle cx="899.3" cy="1211.4" r="6" fill="rgb(25,25,25)" stroke="#000" stroke-width="1.5"/>
<circle cx="903.5" cy="1200.2" r="6" fill="rgb(51,51,51)" stroke="#000" stroke-width="1.5"/>
<circle cx="908.5" cy="1192.2" r="6" fill="rgb(76,76,76)" stroke="#000" stroke-width="1.5"/>
<circle cx="907.8" cy="1192.2" r="6" fill="rgb(102,102,102)" stroke="#000" stroke-width="1.5"/>
<circle cx="906.4" cy="1195.0" r="6" fill="rgb(127,127,127)" stroke="#000" stroke-width="1.5"/>
<circle cx="906.4" cy="1194.1" r="6" fill="rgb(153,153,153)" stroke="#000" stroke-width="1.5"/>
<circle cx="905.0" cy="1193.1" r="6" fill="rgb(178,178,178)" stroke="#000" stroke-width="1.5"/>
<circle cx="904.2" cy="1189.4" r="6" fill="rgb(204,204,204)" stroke="#000" stroke-width="1.5"/>
<circle cx="904.2" cy="1187.0" r="6" fill="rgb(229,229,229)" stroke="#000" stroke-width="1.5"/>
<circle cx="904.2" cy="1186.6" r="6" fill="rgb(254,254,254)" stroke="#000" stroke-width="1.5"/>
</g>
<rect x="716" y="1082" width="356" height="235" fill="none" stroke="#9a9a9a" stroke-width="2.5"/>
<line x1="706" y1="1149.7" x2="716" y2="1149.7" stroke="#d8d8d8" stroke-width="2"/>
<text x="705.8" y="1156.7" font-size="20.35" textLength="38.0" lengthAdjust="spacingAndGlyphs" text-anchor="end" fill="#dedede">0.34</text>
<line x1="706" y1="1243.5" x2="716" y2="1243.5" stroke="#d8d8d8" stroke-width="2"/>
<text x="705.8" y="1250.5" font-size="20.35" textLength="38.0" lengthAdjust="spacingAndGlyphs" text-anchor="end" fill="#dedede">0.32</text>
<line x1="731.8" y1="1317" x2="731.8" y2="1324" stroke="#d8d8d8" stroke-width="2"/>
<text x="731.8" y="1346.0" font-size="20.35" textLength="38.0" lengthAdjust="spacingAndGlyphs" text-anchor="middle" fill="#dedede">0.29</text>
<line x1="803.0" y1="1317" x2="803.0" y2="1324" stroke="#d8d8d8" stroke-width="2"/>
<text x="803.0" y="1346.0" font-size="20.35" textLength="29.0" lengthAdjust="spacingAndGlyphs" text-anchor="middle" fill="#dedede">0.3</text>
<line x1="874.1999999999999" y1="1317" x2="874.1999999999999" y2="1324" stroke="#d8d8d8" stroke-width="2"/>
<text x="874.2" y="1346.0" font-size="20.35" textLength="38.0" lengthAdjust="spacingAndGlyphs" text-anchor="middle" fill="#dedede">0.31</text>
<line x1="945.4" y1="1317" x2="945.4" y2="1324" stroke="#d8d8d8" stroke-width="2"/>
<text x="945.4" y="1346.0" font-size="20.35" textLength="38.0" lengthAdjust="spacingAndGlyphs" text-anchor="middle" fill="#dedede">0.32</text>
<line x1="1016.5999999999999" y1="1317" x2="1016.5999999999999" y2="1324" stroke="#d8d8d8" stroke-width="2"/>
<text x="1016.6" y="1346.0" font-size="20.35" textLength="38.0" lengthAdjust="spacingAndGlyphs" text-anchor="middle" fill="#dedede">0.33</text>
<rect x="1087" y="1040" width="1206.5" height="302" fill="#151515"/>
<linearGradient id="thead" x1="0" x2="0" y1="0" y2="1"><stop offset="0" stop-color="#333"/><stop offset="0.4" stop-color="#2a2a2a"/><stop offset="0.55" stop-color="#1c1c1c"/><stop offset="1" stop-color="#111"/></linearGradient>
<rect x="1088" y="1041" width="1204.5" height="18" fill="#2f2f2f"/>
<rect x="1088" y="1059" width="1204.5" height="17.5" fill="#161616"/>
<rect x="1088" y="1076.5" width="1204.5" height="33.0" fill="#3c3c3c"/>
<text x="1101.9" y="1100.1" font-size="20.20" textLength="67.6" lengthAdjust="spacingAndGlyphs" font-weight="bold" fill="#f2f2f2">x: CIE31</text>
<text x="1265.0" y="1100.1" font-size="20.20" textLength="53.5" lengthAdjust="spacingAndGlyphs" fill="#f0f0f0">0.2886</text>
<text x="1367.6" y="1100.1" font-size="20.20" textLength="53.5" lengthAdjust="spacingAndGlyphs" fill="#f0f0f0">0.3138</text>
<text x="1460.6" y="1100.1" font-size="20.20" textLength="53.5" lengthAdjust="spacingAndGlyphs" fill="#f0f0f0">0.3144</text>
<text x="1553.6" y="1100.1" font-size="20.20" textLength="53.5" lengthAdjust="spacingAndGlyphs" fill="#f0f0f0">0.3151</text>
<text x="1646.6" y="1100.1" font-size="20.20" textLength="53.5" lengthAdjust="spacingAndGlyphs" fill="#f0f0f0">0.3150</text>
<text x="1739.6" y="1100.1" font-size="20.20" textLength="53.5" lengthAdjust="spacingAndGlyphs" fill="#f0f0f0">0.3148</text>
<text x="1832.6" y="1100.1" font-size="20.20" textLength="53.5" lengthAdjust="spacingAndGlyphs" fill="#f0f0f0">0.3148</text>
<text x="1925.6" y="1100.1" font-size="20.20" textLength="53.5" lengthAdjust="spacingAndGlyphs" fill="#f0f0f0">0.3146</text>
<text x="2018.6" y="1100.1" font-size="20.20" textLength="53.5" lengthAdjust="spacingAndGlyphs" fill="#f0f0f0">0.3145</text>
<text x="2111.6" y="1100.1" font-size="20.20" textLength="53.5" lengthAdjust="spacingAndGlyphs" fill="#f0f0f0">0.3145</text>
<text x="2204.6" y="1100.1" font-size="20.20" textLength="53.5" lengthAdjust="spacingAndGlyphs" fill="#f0f0f0">0.3145</text>
<rect x="1088" y="1109.5" width="1204.5" height="33.0" fill="#7f7f7f"/>
<text x="1101.9" y="1133.1" font-size="20.20" textLength="67.6" lengthAdjust="spacingAndGlyphs" font-weight="bold" fill="#f2f2f2">y: CIE31</text>
<text x="1265.0" y="1133.1" font-size="20.20" textLength="53.5" lengthAdjust="spacingAndGlyphs" fill="#f0f0f0">0.2074</text>
<text x="1367.6" y="1133.1" font-size="20.20" textLength="53.5" lengthAdjust="spacingAndGlyphs" fill="#f0f0f0">0.3262</text>
<text x="1460.6" y="1133.1" font-size="20.20" textLength="53.5" lengthAdjust="spacingAndGlyphs" fill="#f0f0f0">0.3286</text>
<text x="1553.6" y="1133.1" font-size="20.20" textLength="53.5" lengthAdjust="spacingAndGlyphs" fill="#f0f0f0">0.3303</text>
<text x="1646.6" y="1133.1" font-size="20.20" textLength="53.5" lengthAdjust="spacingAndGlyphs" fill="#f0f0f0">0.3303</text>
<text x="1739.6" y="1133.1" font-size="20.20" textLength="53.5" lengthAdjust="spacingAndGlyphs" fill="#f0f0f0">0.3297</text>
<text x="1832.6" y="1133.1" font-size="20.20" textLength="53.5" lengthAdjust="spacingAndGlyphs" fill="#f0f0f0">0.3299</text>
<text x="1925.6" y="1133.1" font-size="20.20" textLength="53.5" lengthAdjust="spacingAndGlyphs" fill="#f0f0f0">0.3301</text>
<text x="2018.6" y="1133.1" font-size="20.20" textLength="53.5" lengthAdjust="spacingAndGlyphs" fill="#f0f0f0">0.3309</text>
<text x="2111.6" y="1133.1" font-size="20.20" textLength="53.5" lengthAdjust="spacingAndGlyphs" fill="#f0f0f0">0.3314</text>
<text x="2204.6" y="1133.1" font-size="20.20" textLength="53.5" lengthAdjust="spacingAndGlyphs" fill="#f0f0f0">0.3315</text>
<rect x="1088" y="1142.5" width="1204.5" height="33.0" fill="#3c3c3c"/>
<text x="1101.9" y="1166.1" font-size="20.20" textLength="10.5" lengthAdjust="spacingAndGlyphs" font-weight="bold" fill="#f2f2f2">Y</text>
<text x="1265.0" y="1166.1" font-size="20.20" textLength="53.5" lengthAdjust="spacingAndGlyphs" fill="#f0f0f0">0.0127</text>
<text x="1367.6" y="1166.1" font-size="20.20" textLength="53.5" lengthAdjust="spacingAndGlyphs" fill="#f0f0f0">4.2163</text>
<text x="1460.6" y="1166.1" font-size="20.20" textLength="62.5" lengthAdjust="spacingAndGlyphs" fill="#f0f0f0">13.1095</text>
<text x="1553.6" y="1166.1" font-size="20.20" textLength="62.5" lengthAdjust="spacingAndGlyphs" fill="#f0f0f0">28.3874</text>
<text x="1646.6" y="1166.1" font-size="20.20" textLength="62.5" lengthAdjust="spacingAndGlyphs" fill="#f0f0f0">52.3912</text>
<text x="1739.6" y="1166.1" font-size="20.20" textLength="62.5" lengthAdjust="spacingAndGlyphs" fill="#f0f0f0">84.2775</text>
<text x="1832.6" y="1166.1" font-size="20.20" textLength="72.0" lengthAdjust="spacingAndGlyphs" fill="#f0f0f0">125.2013</text>
<text x="1925.6" y="1166.1" font-size="20.20" textLength="72.0" lengthAdjust="spacingAndGlyphs" fill="#f0f0f0">172.7919</text>
<text x="2018.6" y="1166.1" font-size="20.20" textLength="72.0" lengthAdjust="spacingAndGlyphs" fill="#f0f0f0">234.6465</text>
<text x="2111.6" y="1166.1" font-size="20.20" textLength="72.0" lengthAdjust="spacingAndGlyphs" fill="#f0f0f0">310.9293</text>
<text x="2204.6" y="1166.1" font-size="20.20" textLength="72.0" lengthAdjust="spacingAndGlyphs" fill="#f0f0f0">390.8320</text>
<rect x="1088" y="1175.5" width="1204.5" height="33.0" fill="#7f7f7f"/>
<text x="1101.9" y="1199.1" font-size="20.20" textLength="70.5" lengthAdjust="spacingAndGlyphs" font-weight="bold" fill="#f2f2f2">Target Y</text>
<text x="1265.0" y="1199.1" font-size="20.20" textLength="53.5" lengthAdjust="spacingAndGlyphs" fill="#f0f0f0">0.0127</text>
<text x="1367.6" y="1199.1" font-size="20.20" textLength="53.5" lengthAdjust="spacingAndGlyphs" fill="#f0f0f0">4.0498</text>
<text x="1460.6" y="1199.1" font-size="20.20" textLength="62.5" lengthAdjust="spacingAndGlyphs" fill="#f0f0f0">12.9507</text>
<text x="1553.6" y="1199.1" font-size="20.20" textLength="62.5" lengthAdjust="spacingAndGlyphs" fill="#f0f0f0">28.2580</text>
<text x="1646.6" y="1199.1" font-size="20.20" textLength="62.5" lengthAdjust="spacingAndGlyphs" fill="#f0f0f0">51.9402</text>
<text x="1739.6" y="1199.1" font-size="20.20" textLength="62.5" lengthAdjust="spacingAndGlyphs" fill="#f0f0f0">84.3752</text>
<text x="1832.6" y="1199.1" font-size="20.20" textLength="72.0" lengthAdjust="spacingAndGlyphs" fill="#f0f0f0">124.5070</text>
<text x="1925.6" y="1199.1" font-size="20.20" textLength="72.0" lengthAdjust="spacingAndGlyphs" fill="#f0f0f0">174.0059</text>
<text x="2018.6" y="1199.1" font-size="20.20" textLength="72.0" lengthAdjust="spacingAndGlyphs" fill="#f0f0f0">236.0001</text>
<text x="2111.6" y="1199.1" font-size="20.20" textLength="72.0" lengthAdjust="spacingAndGlyphs" fill="#f0f0f0">309.2672</text>
<text x="2204.6" y="1199.1" font-size="20.20" textLength="72.0" lengthAdjust="spacingAndGlyphs" fill="#f0f0f0">390.8320</text>
<rect x="1088" y="1208.5" width="1204.5" height="33.0" fill="#3c3c3c"/>
<text x="1101.9" y="1232.1" font-size="20.20" textLength="143.0" lengthAdjust="spacingAndGlyphs" font-weight="bold" fill="#f2f2f2">Gamma Log/Log</text>
<text x="1265.0" y="1232.1" font-size="20.20" textLength="53.5" lengthAdjust="spacingAndGlyphs" fill="#f0f0f0">1.0986</text>
<text x="1367.6" y="1232.1" font-size="20.20" textLength="53.5" lengthAdjust="spacingAndGlyphs" fill="#f0f0f0">1.9838</text>
<text x="1460.6" y="1232.1" font-size="20.20" textLength="53.5" lengthAdjust="spacingAndGlyphs" fill="#f0f0f0">2.1094</text>
<text x="1553.6" y="1232.1" font-size="20.20" textLength="53.5" lengthAdjust="spacingAndGlyphs" fill="#f0f0f0">2.1663</text>
<text x="1646.6" y="1232.1" font-size="20.20" textLength="53.5" lengthAdjust="spacingAndGlyphs" fill="#f0f0f0">2.1931</text>
<text x="1739.6" y="1232.1" font-size="20.20" textLength="53.5" lengthAdjust="spacingAndGlyphs" fill="#f0f0f0">2.2259</text>
<text x="1832.6" y="1232.1" font-size="20.20" textLength="53.5" lengthAdjust="spacingAndGlyphs" fill="#f0f0f0">2.2285</text>
<text x="1925.6" y="1232.1" font-size="20.20" textLength="53.5" lengthAdjust="spacingAndGlyphs" fill="#f0f0f0">2.2705</text>
<text x="2018.6" y="1232.1" font-size="20.20" textLength="53.5" lengthAdjust="spacingAndGlyphs" fill="#f0f0f0">2.2864</text>
<text x="2111.6" y="1232.1" font-size="20.20" textLength="53.5" lengthAdjust="spacingAndGlyphs" fill="#f0f0f0">2.2165</text>
<text x="2204.6" y="1232.1" font-size="20.20" textLength="53.5" lengthAdjust="spacingAndGlyphs" fill="#f0f0f0">2.2748</text>
<rect x="1088" y="1241.5" width="1204.5" height="33.0" fill="#7f7f7f"/>
<text x="1101.9" y="1265.1" font-size="20.20" textLength="33.0" lengthAdjust="spacingAndGlyphs" font-weight="bold" fill="#f2f2f2">CCT</text>
<text x="1265.0" y="1265.1" font-size="20.20" textLength="91.5" lengthAdjust="spacingAndGlyphs" fill="#f0f0f0">37319.0000</text>
<text x="1367.6" y="1265.1" font-size="20.20" textLength="81.5" lengthAdjust="spacingAndGlyphs" fill="#f0f0f0">6463.0000</text>
<text x="1460.6" y="1265.1" font-size="20.20" textLength="81.5" lengthAdjust="spacingAndGlyphs" fill="#f0f0f0">6416.0000</text>
<text x="1553.6" y="1265.1" font-size="20.20" textLength="81.5" lengthAdjust="spacingAndGlyphs" fill="#f0f0f0">6364.0000</text>
<text x="1646.6" y="1265.1" font-size="20.20" textLength="81.5" lengthAdjust="spacingAndGlyphs" fill="#f0f0f0">6373.0000</text>
<text x="1739.6" y="1265.1" font-size="20.20" textLength="81.5" lengthAdjust="spacingAndGlyphs" fill="#f0f0f0">6386.0000</text>
<text x="1832.6" y="1265.1" font-size="20.20" textLength="81.5" lengthAdjust="spacingAndGlyphs" fill="#f0f0f0">6386.0000</text>
<text x="1925.6" y="1265.1" font-size="20.20" textLength="81.5" lengthAdjust="spacingAndGlyphs" fill="#f0f0f0">6396.0000</text>
<text x="2018.6" y="1265.1" font-size="20.20" textLength="81.5" lengthAdjust="spacingAndGlyphs" fill="#f0f0f0">6392.0000</text>
<text x="2111.6" y="1265.1" font-size="20.20" textLength="81.5" lengthAdjust="spacingAndGlyphs" fill="#f0f0f0">6388.0000</text>
<text x="2204.6" y="1265.1" font-size="20.20" textLength="81.5" lengthAdjust="spacingAndGlyphs" fill="#f0f0f0">6390.0000</text>
<rect x="1088" y="1274.5" width="1204.5" height="33.0" fill="#3c3c3c"/>
<text x="1101.9" y="1298.1" font-size="20.20" textLength="70.5" lengthAdjust="spacingAndGlyphs" font-weight="bold" fill="#f2f2f2">ΔE 2000</text>
<text x="1265.0" y="1298.1" font-size="20.20" textLength="53.5" lengthAdjust="spacingAndGlyphs" fill="#f0f0f0">0.1080</text>
<text x="1367.6" y="1298.1" font-size="20.20" textLength="53.5" lengthAdjust="spacingAndGlyphs" fill="#f0f0f0">0.7136</text>
<text x="1460.6" y="1298.1" font-size="20.20" textLength="53.5" lengthAdjust="spacingAndGlyphs" fill="#f0f0f0">0.5319</text>
<text x="1553.6" y="1298.1" font-size="20.20" textLength="53.5" lengthAdjust="spacingAndGlyphs" fill="#f0f0f0">0.5627</text>
<text x="1646.6" y="1298.1" font-size="20.20" textLength="53.5" lengthAdjust="spacingAndGlyphs" fill="#f0f0f0">0.6410</text>
<text x="1739.6" y="1298.1" font-size="20.20" textLength="53.5" lengthAdjust="spacingAndGlyphs" fill="#f0f0f0">0.7728</text>
<text x="1832.6" y="1298.1" font-size="20.20" textLength="53.5" lengthAdjust="spacingAndGlyphs" fill="#f0f0f0">0.8376</text>
<text x="1925.6" y="1298.1" font-size="20.20" textLength="53.5" lengthAdjust="spacingAndGlyphs" fill="#f0f0f0">0.7620</text>
<text x="2018.6" y="1298.1" font-size="20.20" textLength="53.5" lengthAdjust="spacingAndGlyphs" fill="#f0f0f0">0.8919</text>
<text x="2111.6" y="1298.1" font-size="20.20" textLength="53.5" lengthAdjust="spacingAndGlyphs" fill="#f0f0f0">1.1892</text>
<text x="2204.6" y="1298.1" font-size="20.20" textLength="53.5" lengthAdjust="spacingAndGlyphs" fill="#f0f0f0">1.3309</text>
<rect x="1088" y="1307.5" width="1204.5" height="33.0" fill="#7f7f7f"/>
<text x="1101.9" y="1331.1" font-size="20.20" textLength="56.0" lengthAdjust="spacingAndGlyphs" font-weight="bold" fill="#f2f2f2">ΔE ITP</text>
<text x="1265.0" y="1331.1" font-size="20.20" textLength="53.5" lengthAdjust="spacingAndGlyphs" fill="#f0f0f0">7.4905</text>
<text x="1367.6" y="1331.1" font-size="20.20" textLength="53.5" lengthAdjust="spacingAndGlyphs" fill="#f0f0f0">2.3685</text>
<text x="1460.6" y="1331.1" font-size="20.20" textLength="53.5" lengthAdjust="spacingAndGlyphs" fill="#f0f0f0">1.2223</text>
<text x="1553.6" y="1331.1" font-size="20.20" textLength="53.5" lengthAdjust="spacingAndGlyphs" fill="#f0f0f0">1.2682</text>
<text x="1646.6" y="1331.1" font-size="20.20" textLength="53.5" lengthAdjust="spacingAndGlyphs" fill="#f0f0f0">1.3463</text>
<text x="1739.6" y="1331.1" font-size="20.20" textLength="53.5" lengthAdjust="spacingAndGlyphs" fill="#f0f0f0">1.2148</text>
<text x="1832.6" y="1331.1" font-size="20.20" textLength="53.5" lengthAdjust="spacingAndGlyphs" fill="#f0f0f0">1.2831</text>
<text x="1925.6" y="1331.1" font-size="20.20" textLength="53.5" lengthAdjust="spacingAndGlyphs" fill="#f0f0f0">1.1936</text>
<text x="2018.6" y="1331.1" font-size="20.20" textLength="53.5" lengthAdjust="spacingAndGlyphs" fill="#f0f0f0">1.1858</text>
<text x="2111.6" y="1331.1" font-size="20.20" textLength="53.5" lengthAdjust="spacingAndGlyphs" fill="#f0f0f0">1.2422</text>
<text x="2204.6" y="1331.1" font-size="20.20" textLength="53.5" lengthAdjust="spacingAndGlyphs" fill="#f0f0f0">1.1975</text>
<text x="1311.5" y="1067.0" font-size="20.20" textLength="9.5" lengthAdjust="spacingAndGlyphs" text-anchor="middle" fill="#f0f0f0">0</text>
<text x="1409.3" y="1067.0" font-size="20.20" textLength="19.0" lengthAdjust="spacingAndGlyphs" text-anchor="middle" fill="#f0f0f0">10</text>
<text x="1502.3" y="1067.0" font-size="20.20" textLength="19.0" lengthAdjust="spacingAndGlyphs" text-anchor="middle" fill="#f0f0f0">20</text>
<text x="1595.3" y="1067.0" font-size="20.20" textLength="19.0" lengthAdjust="spacingAndGlyphs" text-anchor="middle" fill="#f0f0f0">30</text>
<text x="1688.3" y="1067.0" font-size="20.20" textLength="19.0" lengthAdjust="spacingAndGlyphs" text-anchor="middle" fill="#f0f0f0">40</text>
<text x="1781.3" y="1067.0" font-size="20.20" textLength="19.0" lengthAdjust="spacingAndGlyphs" text-anchor="middle" fill="#f0f0f0">50</text>
<text x="1874.3" y="1067.0" font-size="20.20" textLength="19.0" lengthAdjust="spacingAndGlyphs" text-anchor="middle" fill="#f0f0f0">60</text>
<text x="1967.3" y="1067.0" font-size="20.20" textLength="19.0" lengthAdjust="spacingAndGlyphs" text-anchor="middle" fill="#f0f0f0">70</text>
<text x="2060.3" y="1067.0" font-size="20.20" textLength="19.0" lengthAdjust="spacingAndGlyphs" text-anchor="middle" fill="#f0f0f0">80</text>
<text x="2153.3" y="1067.0" font-size="20.20" textLength="19.0" lengthAdjust="spacingAndGlyphs" text-anchor="middle" fill="#f0f0f0">90</text>
<text x="2246.3" y="1067.0" font-size="20.20" textLength="28.0" lengthAdjust="spacingAndGlyphs" text-anchor="middle" fill="#f0f0f0">100</text>
<rect x="201" y="1489" width="2359" height="63" fill="url(#strip)"/>
<rect x="200.8" y="1490" width="149.7" height="64" rx="4" fill="url(#btn)" stroke="#3a3a3a" stroke-width="1"/>
<rect x="205.8" y="1494.5" width="139.5" height="36" rx="3.5" fill="rgb(0,0,0)" stroke="#7a7a7a" stroke-width="1"/>
<text x="275.6" y="1546.0" font-size="13.66" textLength="7.5" lengthAdjust="spacingAndGlyphs" text-anchor="middle" fill="#2e2e2e">0</text>
<rect x="352.8" y="1490" width="149.7" height="64" rx="4" fill="url(#btn)" stroke="#3a3a3a" stroke-width="1"/>
<rect x="357.8" y="1494.5" width="139.5" height="36" rx="3.5" fill="rgb(26,26,26)" stroke="#7a7a7a" stroke-width="1"/>
<text x="427.7" y="1546.0" font-size="13.66" textLength="15.0" lengthAdjust="spacingAndGlyphs" text-anchor="middle" fill="#2e2e2e">10</text>
<rect x="504.9" y="1490" width="149.7" height="64" rx="4" fill="url(#btn)" stroke="#3a3a3a" stroke-width="1"/>
<rect x="509.9" y="1494.5" width="139.5" height="36" rx="3.5" fill="rgb(51,51,51)" stroke="#7a7a7a" stroke-width="1"/>
<text x="579.7" y="1546.0" font-size="13.66" textLength="15.0" lengthAdjust="spacingAndGlyphs" text-anchor="middle" fill="#2e2e2e">20</text>
<rect x="656.9" y="1490" width="149.7" height="64" rx="4" fill="url(#btn)" stroke="#3a3a3a" stroke-width="1"/>
<rect x="661.9" y="1494.5" width="139.5" height="36" rx="3.5" fill="rgb(76,76,76)" stroke="#7a7a7a" stroke-width="1"/>
<text x="731.8" y="1546.0" font-size="13.66" textLength="15.0" lengthAdjust="spacingAndGlyphs" text-anchor="middle" fill="#2e2e2e">30</text>
<rect x="809.0" y="1490" width="149.7" height="64" rx="4" fill="url(#btn)" stroke="#3a3a3a" stroke-width="1"/>
<rect x="814.0" y="1494.5" width="139.5" height="36" rx="3.5" fill="rgb(102,102,102)" stroke="#7a7a7a" stroke-width="1"/>
<text x="883.8" y="1546.0" font-size="13.66" textLength="15.0" lengthAdjust="spacingAndGlyphs" text-anchor="middle" fill="#2e2e2e">40</text>
<rect x="961.0" y="1490" width="149.7" height="64" rx="4" fill="url(#btn)" stroke="#3a3a3a" stroke-width="1"/>
<rect x="966.0" y="1494.5" width="139.5" height="36" rx="3.5" fill="rgb(128,128,128)" stroke="#7a7a7a" stroke-width="1"/>
<text x="1035.8" y="1546.0" font-size="13.66" textLength="15.0" lengthAdjust="spacingAndGlyphs" text-anchor="middle" fill="#2e2e2e">50</text>
<rect x="1113.0" y="1490" width="149.7" height="64" rx="4" fill="url(#btn)" stroke="#3a3a3a" stroke-width="1"/>
<rect x="1118.0" y="1494.5" width="139.5" height="36" rx="3.5" fill="rgb(153,153,153)" stroke="#7a7a7a" stroke-width="1"/>
<text x="1187.9" y="1546.0" font-size="13.66" textLength="15.0" lengthAdjust="spacingAndGlyphs" text-anchor="middle" fill="#2e2e2e">60</text>
<rect x="1265.1" y="1490" width="149.7" height="64" rx="4" fill="url(#btn)" stroke="#3a3a3a" stroke-width="1"/>
<rect x="1270.1" y="1494.5" width="139.5" height="36" rx="3.5" fill="rgb(178,178,178)" stroke="#7a7a7a" stroke-width="1"/>
<text x="1339.9" y="1546.0" font-size="13.66" textLength="15.0" lengthAdjust="spacingAndGlyphs" text-anchor="middle" fill="#2e2e2e">70</text>
<rect x="1417.1" y="1490" width="149.7" height="64" rx="4" fill="url(#btn)" stroke="#3a3a3a" stroke-width="1"/>
<rect x="1422.1" y="1494.5" width="139.5" height="36" rx="3.5" fill="rgb(204,204,204)" stroke="#7a7a7a" stroke-width="1"/>
<text x="1492.0" y="1546.0" font-size="13.66" textLength="15.0" lengthAdjust="spacingAndGlyphs" text-anchor="middle" fill="#2e2e2e">80</text>
<rect x="1569.2" y="1490" width="149.7" height="64" rx="4" fill="url(#btn)" stroke="#3a3a3a" stroke-width="1"/>
<rect x="1574.2" y="1494.5" width="139.5" height="36" rx="3.5" fill="rgb(230,230,230)" stroke="#7a7a7a" stroke-width="1"/>
<text x="1644.0" y="1546.0" font-size="13.66" textLength="15.0" lengthAdjust="spacingAndGlyphs" text-anchor="middle" fill="#2e2e2e">90</text>
<rect x="1721.2" y="1490" width="149.7" height="64" rx="4" fill="#262626"/>
<rect x="1726.2" y="1494.5" width="139.5" height="36" rx="3.5" fill="#ffffff" stroke="#444" stroke-width="1"/>
<text x="1796.0" y="1546.0" font-size="13.66" textLength="19.0" lengthAdjust="spacingAndGlyphs" text-anchor="middle" font-weight="bold" fill="#ffffff">100</text>
<linearGradient id="tbtn" x1="0" x2="0" y1="0" y2="1"><stop offset="0" stop-color="#b8b8b8"/><stop offset="1" stop-color="#8a8a8a"/></linearGradient>
<linearGradient id="tbar" x1="0" x2="0" y1="0" y2="1"><stop offset="0" stop-color="#8a8a8a"/><stop offset="1" stop-color="#5e5e5e"/></linearGradient>
<rect x="2287" y="1490" width="275" height="30" rx="3" fill="url(#tbar)" stroke="#3a3a3a" stroke-width="1"/>
<line x1="2332" y1="1490" x2="2332" y2="1520" stroke="#444" stroke-width="1"/>
<line x1="2377.5" y1="1490" x2="2377.5" y2="1520" stroke="#444" stroke-width="1"/>
<line x1="2422" y1="1490" x2="2422" y2="1520" stroke="#444" stroke-width="1"/>
<line x1="2466.8" y1="1490" x2="2466.8" y2="1520" stroke="#444" stroke-width="1"/>
<line x1="2511.5" y1="1490" x2="2511.5" y2="1520" stroke="#444" stroke-width="1"/>
<circle cx="2309.5" cy="1511" r="7.5" fill="#9a9a9a" opacity="0.6"/>
<circle cx="2354.7" cy="1511" r="7.5" fill="#9a9a9a" opacity="0.6"/>
<circle cx="2399.7" cy="1511" r="7.5" fill="#9a9a9a" opacity="0.6"/>
<circle cx="2444.4" cy="1511" r="7.5" fill="#9a9a9a" opacity="0.6"/>
<circle cx="2489.1" cy="1511" r="7.5" fill="#9a9a9a" opacity="0.6"/>
<circle cx="2536" cy="1511" r="7.5" fill="#9a9a9a" opacity="0.6"/>
<rect x="2237.6" y="1509" width="47" height="45" rx="3" fill="#777" stroke="#3a3a3a" stroke-width="1"/>
<rect x="2247" y="1515" width="28" height="29" rx="4" fill="#b0b0b0" stroke="#2a2a2a" stroke-width="2.2"/>
<rect x="2254" y="1522" width="14" height="14" fill="#000"/>
<rect x="2287" y="1521" width="135" height="33" rx="3" fill="url(#tbtn)" stroke="#3a3a3a" stroke-width="1"/>
<rect x="2422" y="1521" width="140" height="33" rx="3" fill="url(#tbtn)" stroke="#3a3a3a" stroke-width="1"/>
<circle cx="2316.7" cy="1535.5" r="9.5" fill="#8c8c8c"/>
<circle cx="2530" cy="1535.5" r="9.5" fill="#8c8c8c"/>
<text x="2316.7" y="1540.5" font-size="17.00" text-anchor="middle" fill="#333">«</text>
<text x="2530.0" y="1540.5" font-size="17.00" text-anchor="middle" fill="#333">»</text>
<text x="2343.4" y="1543.6" font-size="22.38" textLength="50.4" lengthAdjust="spacingAndGlyphs" fill="#2e2e2e">Back</text>
<text x="2450.6" y="1543.6" font-size="22.38" textLength="51.9" lengthAdjust="spacingAndGlyphs" fill="#2e2e2e">Next</text>
<g opacity="0.72">
<path d="M2173 1468 L2225 1481 L2231 1486 M2173 1468 L2176 1513 L2208 1533 L2264 1517 L2188 1513.5" fill="none" stroke="#f0f0f0" stroke-width="7" stroke-linejoin="round" stroke-linecap="round" opacity="0.45"/>
<path d="M2173 1468 L2225 1481 M2173 1468 L2176 1513 L2208 1533 L2264 1517 L2188 1513.5" fill="none" stroke="#a82535" stroke-width="5.5" stroke-linejoin="round" stroke-linecap="round"/>
<path d="M2189 1487 L2207 1507 L2233 1469" fill="none" stroke="#e8e8e8" stroke-width="6" stroke-linecap="round" stroke-linejoin="round" opacity="0.5"/>
<path d="M2189 1487 L2207 1507 L2233 1469" fill="none" stroke="#3a3a3a" stroke-width="3.5" stroke-linecap="round" stroke-linejoin="round"/>
<text x="2234" y="1508" font-size="36.6" font-weight="bold" textLength="197" lengthAdjust="spacingAndGlyphs" fill="#d8d8d8" stroke="#d8d8d8" stroke-width="3.4" stroke-linejoin="round" opacity="0.6">NOTEBOOK</text>
<text x="2431" y="1508" font-size="36.6" font-weight="bold" textLength="118.6" lengthAdjust="spacingAndGlyphs" fill="#d8d8d8" stroke="#d8d8d8" stroke-width="3.4" stroke-linejoin="round" opacity="0.6">CHECK</text>
<text x="2234" y="1508" font-size="36.6" font-weight="bold" textLength="197" lengthAdjust="spacingAndGlyphs" fill="#a8303e" stroke="#a8303e" stroke-width="0.7" stroke-linejoin="round">NOTEBOOK</text>
<text x="2431" y="1508" font-size="36.6" font-weight="bold" textLength="118.6" lengthAdjust="spacingAndGlyphs" fill="#2e2e2e" stroke="#2e2e2e" stroke-width="0.7" stroke-linejoin="round">CHECK</text>
</g>
</svg></body></html>
